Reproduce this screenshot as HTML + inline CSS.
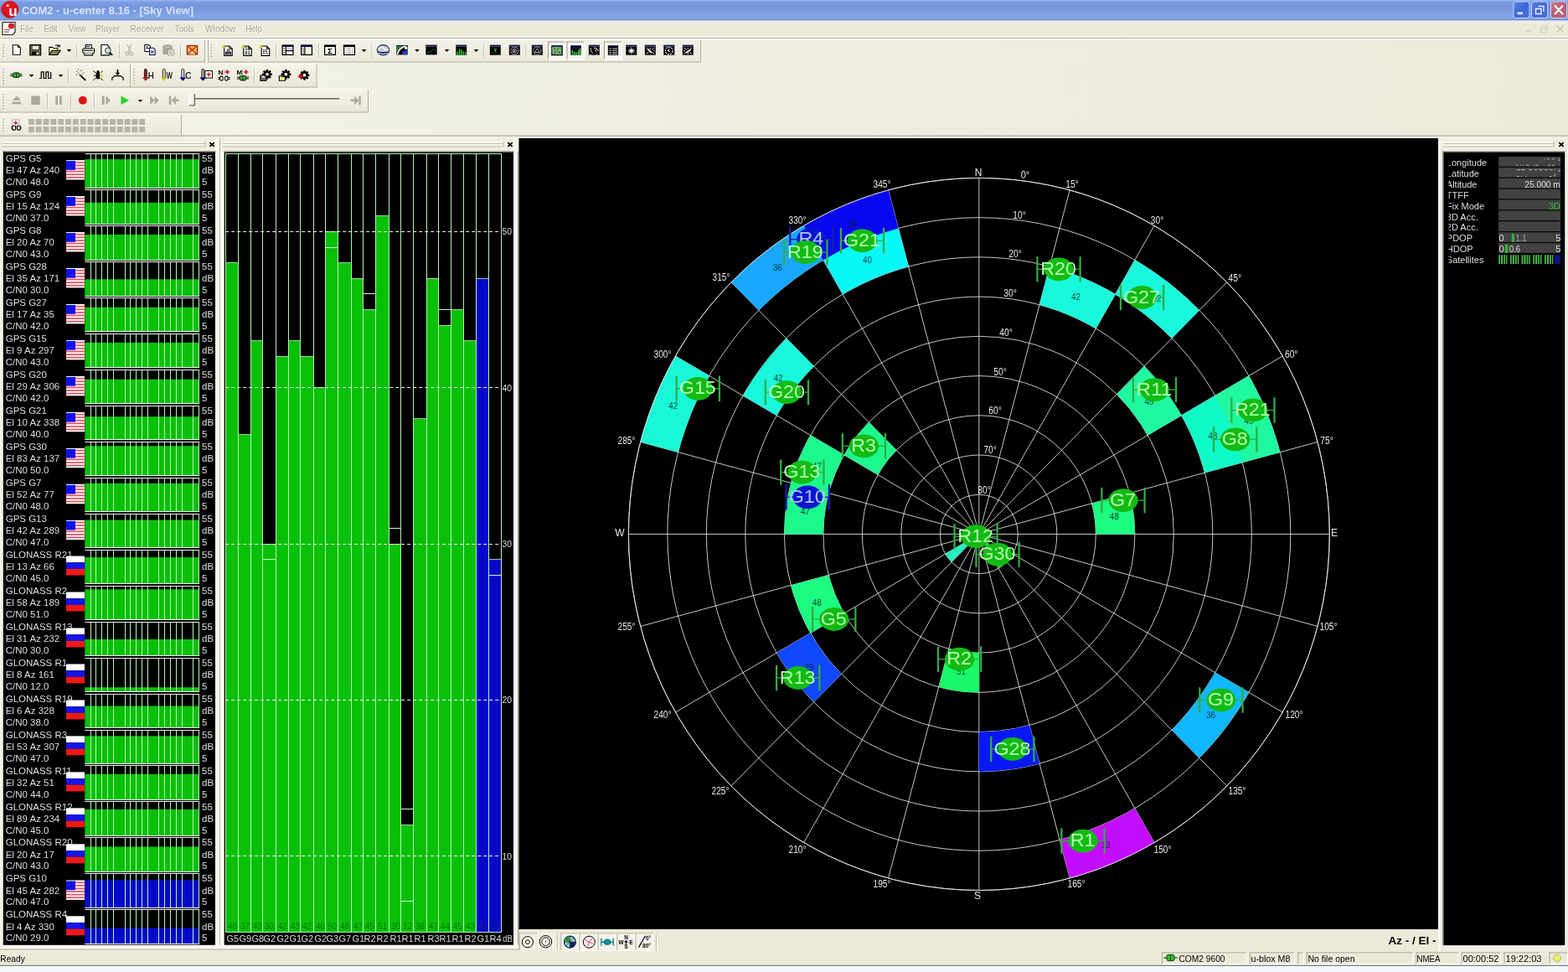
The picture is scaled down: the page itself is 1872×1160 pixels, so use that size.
<!DOCTYPE html>
<html><head><meta charset="utf-8"><title>COM2 - u-center 8.16 - [Sky View]</title>
<style>html,body{margin:0;padding:0;background:#ece9d8;overflow:hidden}svg{display:block;font-family:"Liberation Sans",sans-serif;will-change:transform}</style>
</head><body>
<svg width="1872" height="1160" viewBox="0 0 1872 1160">
<defs>
<linearGradient id="tb" x1="0" y1="0" x2="0" y2="1">
<stop offset="0" stop-color="#9cbcf8"/><stop offset="0.07" stop-color="#80a0e6"/><stop offset="0.3" stop-color="#7594dc"/>
<stop offset="0.55" stop-color="#7a9ae0"/><stop offset="0.8" stop-color="#82a8ea"/><stop offset="0.9" stop-color="#80a4e6"/><stop offset="0.96" stop-color="#7488c4"/><stop offset="1" stop-color="#7488c4"/>
</linearGradient>
<linearGradient id="dock" x1="0" y1="0" x2="1" y2="0">
<stop offset="0" stop-color="#f4f3ec"/><stop offset="0.3" stop-color="#f0efe6"/><stop offset="0.65" stop-color="#eeecdf"/><stop offset="1" stop-color="#ece9d8"/>
</linearGradient>
<linearGradient id="tool" x1="0" y1="0" x2="0" y2="1">
<stop offset="0" stop-color="#f3f2ea"/><stop offset="0.5" stop-color="#efeddf"/><stop offset="1" stop-color="#e9e6d6"/>
</linearGradient>
<linearGradient id="btnb" x1="0" y1="0" x2="1" y2="1">
<stop offset="0" stop-color="#5a80e6"/><stop offset="0.5" stop-color="#3f66d4"/><stop offset="1" stop-color="#4a74dc"/>
</linearGradient>
<linearGradient id="btnr" x1="0" y1="0" x2="1" y2="1">
<stop offset="0" stop-color="#cc7a8c"/><stop offset="0.5" stop-color="#b85a70"/><stop offset="1" stop-color="#c0667a"/>
</linearGradient>
</defs>
<rect x="0.00" y="0.00" width="1872.00" height="1160.00" fill="#ece9d8"/><rect x="0.00" y="46.80" width="1872.00" height="118.00" fill="url(#dock)"/><rect x="0.00" y="0.00" width="1872.00" height="24.70" fill="url(#tb)"/><circle cx="11.8" cy="11.4" r="10.2" fill="#e0141e" stroke="#a01018" stroke-width="0.8" stroke-dasharray="1.2,1"/><circle cx="9.2" cy="6.8" r="1.5" fill="#ffe0e0"/><text x="15.5" y="18.5" font-size="17" fill="#fff" text-anchor="middle" font-weight="bold" font-family='"Liberation Sans", sans-serif'>u</text><text x="26.0" y="17.3" font-size="13.5" fill="#d8e4f8" font-weight="bold" textLength="205" lengthAdjust="spacingAndGlyphs" font-family='"Liberation Sans", sans-serif'>COM2 - u-center 8.16 - [Sky View]</text><rect x="1807" y="2" width="19" height="19.5" rx="3" fill="url(#btnb)" stroke="#c4d4f6" stroke-width="1"/><rect x="1828.6" y="2" width="19" height="19.5" rx="3" fill="url(#btnb)" stroke="#c4d4f6" stroke-width="1"/><rect x="1851.5" y="2" width="19" height="19.5" rx="3" fill="url(#btnr)" stroke="#c4d4f6" stroke-width="1"/><rect x="1811.50" y="14.50" width="6.50" height="2.60" fill="#e8f0ff"/><path d="M1836.5,7.5h6.5v6.5M1833.5,10.5h6.5v6h-6.5z" fill="none" stroke="#e8f0ff" stroke-width="1.4"/><path d="M1856,6.5l10,10.5M1866,6.5l-10,10.5" stroke="#fff" stroke-width="2.2" fill="none"/><rect x="0.00" y="24.70" width="1872.00" height="21.00" fill="#ece9d8"/><rect x="0.00" y="24.70" width="1872.00" height="1.60" fill="#e2eafc"/><rect x="0.00" y="26.30" width="1872.00" height="1.20" fill="#f2f1e8"/><rect x="0.00" y="43.60" width="1872.00" height="1.40" fill="#f8f7ee"/><line x1="0.00" y1="45.50" x2="1872.00" y2="45.50" stroke="#b0ad9c" stroke-width="1"/><line x1="0.00" y1="46.50" x2="1872.00" y2="46.50" stroke="#ffffff" stroke-width="1"/><path d="M3,26.5h15v12l-3,3h-12z" fill="#fff" stroke="#222" stroke-width="1.2"/><circle cx="13.5" cy="31" r="3.6" fill="#d8202c"/><line x1="5.00" y1="35.50" x2="12.00" y2="35.50" stroke="#c04040" stroke-width="1"/><line x1="5.00" y1="38.00" x2="11.00" y2="38.00" stroke="#444" stroke-width="1"/><text x="25.1" y="38.6" font-size="11.5" fill="#ffffff" textLength="15.75" lengthAdjust="spacingAndGlyphs" opacity="0.75" font-family='"Liberation Sans", sans-serif'>File</text><text x="24.2" y="37.8" font-size="11.5" fill="#a8a69c" textLength="15.75" lengthAdjust="spacingAndGlyphs" font-family='"Liberation Sans", sans-serif'>File</text><text x="53.4" y="38.6" font-size="11.5" fill="#ffffff" textLength="16.25" lengthAdjust="spacingAndGlyphs" opacity="0.75" font-family='"Liberation Sans", sans-serif'>Edit</text><text x="52.5" y="37.8" font-size="11.5" fill="#a8a69c" textLength="16.25" lengthAdjust="spacingAndGlyphs" font-family='"Liberation Sans", sans-serif'>Edit</text><text x="82.7" y="38.6" font-size="11.5" fill="#ffffff" textLength="20.75" lengthAdjust="spacingAndGlyphs" opacity="0.75" font-family='"Liberation Sans", sans-serif'>View</text><text x="81.8" y="37.8" font-size="11.5" fill="#a8a69c" textLength="20.75" lengthAdjust="spacingAndGlyphs" font-family='"Liberation Sans", sans-serif'>View</text><text x="115.4" y="38.6" font-size="11.5" fill="#ffffff" textLength="28.75" lengthAdjust="spacingAndGlyphs" opacity="0.75" font-family='"Liberation Sans", sans-serif'>Player</text><text x="114.5" y="37.8" font-size="11.5" fill="#a8a69c" textLength="28.75" lengthAdjust="spacingAndGlyphs" font-family='"Liberation Sans", sans-serif'>Player</text><text x="156.4" y="38.6" font-size="11.5" fill="#ffffff" textLength="40.25" lengthAdjust="spacingAndGlyphs" opacity="0.75" font-family='"Liberation Sans", sans-serif'>Receiver</text><text x="155.5" y="37.8" font-size="11.5" fill="#a8a69c" textLength="40.25" lengthAdjust="spacingAndGlyphs" font-family='"Liberation Sans", sans-serif'>Receiver</text><text x="209.7" y="38.6" font-size="11.5" fill="#ffffff" textLength="23.25" lengthAdjust="spacingAndGlyphs" opacity="0.75" font-family='"Liberation Sans", sans-serif'>Tools</text><text x="208.8" y="37.8" font-size="11.5" fill="#a8a69c" textLength="23.25" lengthAdjust="spacingAndGlyphs" font-family='"Liberation Sans", sans-serif'>Tools</text><text x="245.9" y="38.6" font-size="11.5" fill="#ffffff" textLength="36.25" lengthAdjust="spacingAndGlyphs" opacity="0.75" font-family='"Liberation Sans", sans-serif'>Window</text><text x="245.0" y="37.8" font-size="11.5" fill="#a8a69c" textLength="36.25" lengthAdjust="spacingAndGlyphs" font-family='"Liberation Sans", sans-serif'>Window</text><text x="294.1" y="38.6" font-size="11.5" fill="#ffffff" textLength="19.75" lengthAdjust="spacingAndGlyphs" opacity="0.75" font-family='"Liberation Sans", sans-serif'>Help</text><text x="293.2" y="37.8" font-size="11.5" fill="#a8a69c" textLength="19.75" lengthAdjust="spacingAndGlyphs" font-family='"Liberation Sans", sans-serif'>Help</text><rect x="1821.00" y="36.00" width="7.00" height="1.60" fill="#d0cdbc"/><path d="M1841.5,31h6v6M1839.5,33h6v6h-6z" fill="none" stroke="#d0cdbc" stroke-width="1.2"/><path d="M1859,31l7,7M1866,31l-7,7" stroke="#ccc9b8" stroke-width="1.6" fill="none"/><rect x="0.00" y="47.00" width="245.00" height="27.50" fill="url(#tool)"/><line x1="0.00" y1="74.00" x2="245.00" y2="74.00" stroke="#b4b09c" stroke-width="1"/><line x1="244.50" y1="47.00" x2="244.50" y2="74.50" stroke="#b4b09c" stroke-width="1"/><line x1="0.00" y1="47.50" x2="245.00" y2="47.50" stroke="#fbfaf4" stroke-width="1"/><rect x="3.50" y="53.00" width="1.60" height="1.40" fill="#a09d8c"/><rect x="4.70" y="54.20" width="1.20" height="1.20" fill="#fff"/><rect x="3.50" y="56.45" width="1.60" height="1.40" fill="#a09d8c"/><rect x="4.70" y="57.65" width="1.20" height="1.20" fill="#fff"/><rect x="3.50" y="59.90" width="1.60" height="1.40" fill="#a09d8c"/><rect x="4.70" y="61.10" width="1.20" height="1.20" fill="#fff"/><rect x="3.50" y="63.35" width="1.60" height="1.40" fill="#a09d8c"/><rect x="4.70" y="64.55" width="1.20" height="1.20" fill="#fff"/><rect x="3.50" y="66.80" width="1.60" height="1.40" fill="#a09d8c"/><rect x="4.70" y="68.00" width="1.20" height="1.20" fill="#fff"/><rect x="248.00" y="47.00" width="589.00" height="27.50" fill="url(#tool)"/><line x1="248.00" y1="74.00" x2="837.00" y2="74.00" stroke="#b4b09c" stroke-width="1"/><line x1="836.50" y1="47.00" x2="836.50" y2="74.50" stroke="#b4b09c" stroke-width="1"/><line x1="248.00" y1="47.50" x2="837.00" y2="47.50" stroke="#fbfaf4" stroke-width="1"/><rect x="251.50" y="53.00" width="1.60" height="1.40" fill="#a09d8c"/><rect x="252.70" y="54.20" width="1.20" height="1.20" fill="#fff"/><rect x="251.50" y="56.45" width="1.60" height="1.40" fill="#a09d8c"/><rect x="252.70" y="57.65" width="1.20" height="1.20" fill="#fff"/><rect x="251.50" y="59.90" width="1.60" height="1.40" fill="#a09d8c"/><rect x="252.70" y="61.10" width="1.20" height="1.20" fill="#fff"/><rect x="251.50" y="63.35" width="1.60" height="1.40" fill="#a09d8c"/><rect x="252.70" y="64.55" width="1.20" height="1.20" fill="#fff"/><rect x="251.50" y="66.80" width="1.60" height="1.40" fill="#a09d8c"/><rect x="252.70" y="68.00" width="1.20" height="1.20" fill="#fff"/><line x1="248.50" y1="47.00" x2="248.50" y2="74.50" stroke="#b4b09c" stroke-width="1"/><rect x="0.00" y="76.00" width="156.00" height="28.50" fill="url(#tool)"/><line x1="0.00" y1="104.00" x2="156.00" y2="104.00" stroke="#b4b09c" stroke-width="1"/><line x1="155.50" y1="76.00" x2="155.50" y2="104.50" stroke="#b4b09c" stroke-width="1"/><line x1="0.00" y1="76.50" x2="156.00" y2="76.50" stroke="#fbfaf4" stroke-width="1"/><rect x="3.50" y="82.00" width="1.60" height="1.40" fill="#a09d8c"/><rect x="4.70" y="83.20" width="1.20" height="1.20" fill="#fff"/><rect x="3.50" y="85.45" width="1.60" height="1.40" fill="#a09d8c"/><rect x="4.70" y="86.65" width="1.20" height="1.20" fill="#fff"/><rect x="3.50" y="88.90" width="1.60" height="1.40" fill="#a09d8c"/><rect x="4.70" y="90.10" width="1.20" height="1.20" fill="#fff"/><rect x="3.50" y="92.35" width="1.60" height="1.40" fill="#a09d8c"/><rect x="4.70" y="93.55" width="1.20" height="1.20" fill="#fff"/><rect x="3.50" y="95.80" width="1.60" height="1.40" fill="#a09d8c"/><rect x="4.70" y="97.00" width="1.20" height="1.20" fill="#fff"/><rect x="3.50" y="99.25" width="1.60" height="1.40" fill="#a09d8c"/><rect x="4.70" y="100.45" width="1.20" height="1.20" fill="#fff"/><rect x="156.00" y="76.00" width="222.50" height="28.50" fill="url(#tool)"/><line x1="156.00" y1="104.00" x2="378.50" y2="104.00" stroke="#b4b09c" stroke-width="1"/><line x1="378.00" y1="76.00" x2="378.00" y2="104.50" stroke="#b4b09c" stroke-width="1"/><line x1="156.00" y1="76.50" x2="378.50" y2="76.50" stroke="#fbfaf4" stroke-width="1"/><rect x="159.50" y="82.00" width="1.60" height="1.40" fill="#a09d8c"/><rect x="160.70" y="83.20" width="1.20" height="1.20" fill="#fff"/><rect x="159.50" y="85.45" width="1.60" height="1.40" fill="#a09d8c"/><rect x="160.70" y="86.65" width="1.20" height="1.20" fill="#fff"/><rect x="159.50" y="88.90" width="1.60" height="1.40" fill="#a09d8c"/><rect x="160.70" y="90.10" width="1.20" height="1.20" fill="#fff"/><rect x="159.50" y="92.35" width="1.60" height="1.40" fill="#a09d8c"/><rect x="160.70" y="93.55" width="1.20" height="1.20" fill="#fff"/><rect x="159.50" y="95.80" width="1.60" height="1.40" fill="#a09d8c"/><rect x="160.70" y="97.00" width="1.20" height="1.20" fill="#fff"/><rect x="159.50" y="99.25" width="1.60" height="1.40" fill="#a09d8c"/><rect x="160.70" y="100.45" width="1.20" height="1.20" fill="#fff"/><line x1="155.50" y1="76.00" x2="155.50" y2="104.50" stroke="#b4b09c" stroke-width="1"/><rect x="0.00" y="106.00" width="440.00" height="28.50" fill="url(#tool)"/><line x1="0.00" y1="134.00" x2="440.00" y2="134.00" stroke="#b4b09c" stroke-width="1"/><line x1="439.50" y1="106.00" x2="439.50" y2="134.50" stroke="#b4b09c" stroke-width="1"/><line x1="0.00" y1="106.50" x2="440.00" y2="106.50" stroke="#fbfaf4" stroke-width="1"/><rect x="3.50" y="112.00" width="1.60" height="1.40" fill="#a09d8c"/><rect x="4.70" y="113.20" width="1.20" height="1.20" fill="#fff"/><rect x="3.50" y="115.45" width="1.60" height="1.40" fill="#a09d8c"/><rect x="4.70" y="116.65" width="1.20" height="1.20" fill="#fff"/><rect x="3.50" y="118.90" width="1.60" height="1.40" fill="#a09d8c"/><rect x="4.70" y="120.10" width="1.20" height="1.20" fill="#fff"/><rect x="3.50" y="122.35" width="1.60" height="1.40" fill="#a09d8c"/><rect x="4.70" y="123.55" width="1.20" height="1.20" fill="#fff"/><rect x="3.50" y="125.80" width="1.60" height="1.40" fill="#a09d8c"/><rect x="4.70" y="127.00" width="1.20" height="1.20" fill="#fff"/><rect x="3.50" y="129.25" width="1.60" height="1.40" fill="#a09d8c"/><rect x="4.70" y="130.45" width="1.20" height="1.20" fill="#fff"/><rect x="0.00" y="136.00" width="217.00" height="27.50" fill="url(#tool)"/><line x1="0.00" y1="163.00" x2="217.00" y2="163.00" stroke="#b4b09c" stroke-width="1"/><line x1="216.50" y1="136.00" x2="216.50" y2="163.50" stroke="#b4b09c" stroke-width="1"/><line x1="0.00" y1="136.50" x2="217.00" y2="136.50" stroke="#fbfaf4" stroke-width="1"/><rect x="3.50" y="142.00" width="1.60" height="1.40" fill="#a09d8c"/><rect x="4.70" y="143.20" width="1.20" height="1.20" fill="#fff"/><rect x="3.50" y="145.45" width="1.60" height="1.40" fill="#a09d8c"/><rect x="4.70" y="146.65" width="1.20" height="1.20" fill="#fff"/><rect x="3.50" y="148.90" width="1.60" height="1.40" fill="#a09d8c"/><rect x="4.70" y="150.10" width="1.20" height="1.20" fill="#fff"/><rect x="3.50" y="152.35" width="1.60" height="1.40" fill="#a09d8c"/><rect x="4.70" y="153.55" width="1.20" height="1.20" fill="#fff"/><rect x="3.50" y="155.80" width="1.60" height="1.40" fill="#a09d8c"/><rect x="4.70" y="157.00" width="1.20" height="1.20" fill="#fff"/><rect x="0.00" y="161.00" width="1872.00" height="2.40" fill="#c9c6ba"/><rect x="0.00" y="163.40" width="1872.00" height="1.60" fill="#f6f5ee"/><rect x="0.00" y="165.00" width="619.50" height="972.00" fill="#efede1"/><rect x="1717.00" y="165.00" width="155.00" height="972.00" fill="#efede1"/><rect x="619.50" y="1109.00" width="1097.50" height="28.00" fill="#ece9d8"/><rect x="0.00" y="1132.50" width="619.50" height="4.50" fill="#ece9d8"/><rect x="257.00" y="165.00" width="4.80" height="967.50" fill="#f8f7f1"/><line x1="262.30" y1="165.00" x2="262.30" y2="1133.00" stroke="#aeab9a" stroke-width="1"/><rect x="262.80" y="165.00" width="5.00" height="967.50" fill="#f8f7f1"/><rect x="613.00" y="165.00" width="5.00" height="967.50" fill="#f6f5ee"/><line x1="618.70" y1="165.00" x2="618.70" y2="1133.00" stroke="#a8a596" stroke-width="1.5"/><rect x="1717.00" y="165.00" width="2.50" height="972.00" fill="#fbfaf5"/><rect x="0.00" y="165.00" width="3.80" height="967.50" fill="#f4f3ea"/><rect x="0.00" y="1127.80" width="619.00" height="4.70" fill="#faf9f4"/><line x1="0.00" y1="1133.00" x2="619.50" y2="1133.00" stroke="#b0ad9c" stroke-width="1"/><rect x="0.00" y="165.00" width="619.50" height="15.40" fill="#efede1"/><rect x="257.00" y="165.00" width="5.00" height="15.40" fill="#f8f7f1"/><rect x="613.00" y="165.00" width="5.00" height="15.40" fill="#f6f5ee"/><line x1="262.30" y1="165.00" x2="262.30" y2="181.00" stroke="#aeab9a" stroke-width="1"/><rect x="2.50" y="168.90" width="242.00" height="2.30" fill="#fcfbf3"/><line x1="2.50" y1="171.60" x2="244.50" y2="171.60" stroke="#b4b19e" stroke-width="0.9"/><line x1="244.50" y1="168.90" x2="244.50" y2="171.90" stroke="#b4b19e" stroke-width="0.9"/><rect x="2.50" y="172.10" width="242.00" height="2.30" fill="#fcfbf3"/><line x1="2.50" y1="174.80" x2="244.50" y2="174.80" stroke="#b4b19e" stroke-width="0.9"/><line x1="244.50" y1="172.10" x2="244.50" y2="175.10" stroke="#b4b19e" stroke-width="0.9"/><path d="M250.3,170.1l5.4,4.8M255.7,170.1l-5.4,4.8" stroke="#000" stroke-width="1.8" fill="none"/><rect x="266.00" y="168.90" width="335.00" height="2.30" fill="#fcfbf3"/><line x1="266.00" y1="171.60" x2="601.00" y2="171.60" stroke="#b4b19e" stroke-width="0.9"/><line x1="601.00" y1="168.90" x2="601.00" y2="171.90" stroke="#b4b19e" stroke-width="0.9"/><rect x="266.00" y="172.10" width="335.00" height="2.30" fill="#fcfbf3"/><line x1="266.00" y1="174.80" x2="601.00" y2="174.80" stroke="#b4b19e" stroke-width="0.9"/><line x1="601.00" y1="172.10" x2="601.00" y2="175.10" stroke="#b4b19e" stroke-width="0.9"/><path d="M606.3,170.1l5.4,4.8M611.7,170.1l-5.4,4.8" stroke="#000" stroke-width="1.8" fill="none"/><rect x="1722.50" y="168.90" width="132.50" height="2.30" fill="#fcfbf3"/><line x1="1722.50" y1="171.60" x2="1855.00" y2="171.60" stroke="#b4b19e" stroke-width="0.9"/><line x1="1855.00" y1="168.90" x2="1855.00" y2="171.90" stroke="#b4b19e" stroke-width="0.9"/><rect x="1722.50" y="172.10" width="132.50" height="2.30" fill="#fcfbf3"/><line x1="1722.50" y1="174.80" x2="1855.00" y2="174.80" stroke="#b4b19e" stroke-width="0.9"/><line x1="1855.00" y1="172.10" x2="1855.00" y2="175.10" stroke="#b4b19e" stroke-width="0.9"/><path d="M1861.3,170.1l5.4,4.8M1866.7,170.1l-5.4,4.8" stroke="#000" stroke-width="1.8" fill="none"/><rect x="3.00" y="180.30" width="254.50" height="1.40" fill="#7c796a"/><rect x="267.00" y="180.50" width="346.50" height="1.40" fill="#7c796a"/><rect x="1722.00" y="180.50" width="147.50" height="1.30" fill="#7c796a"/><rect x="1722.00" y="180.50" width="1.40" height="949.00" fill="#8a8778"/><rect x="1722.00" y="1128.30" width="147.50" height="1.20" fill="#fff"/><rect x="1868.40" y="180.50" width="1.20" height="949.00" fill="#fff"/>
<g font-family='"Liberation Sans", sans-serif'>
<rect x="3.80" y="181.50" width="253.20" height="946.30" fill="#000"/>
<rect x="101.30" y="190.07" width="136.30" height="34.03" fill="#08c008"/>
<path d="M108.50,183.50V224.10M114.50,183.50V224.10M121.50,183.50V224.10M128.50,183.50V224.10M135.50,183.50V224.10M149.50,183.50V224.10M155.50,183.50V224.10M162.50,183.50V224.10M169.50,183.50V224.10M176.50,183.50V224.10M189.50,183.50V224.10M196.50,183.50V224.10M203.50,183.50V224.10M210.50,183.50V224.10M217.50,183.50V224.10M230.50,183.50V224.10M237.50,183.50V224.10" stroke="#b8f4b8" stroke-width="1" fill="none"/>
<path d="M101.30,183.50H238.10M101.30,224.50H238.10" stroke="#f4f4f4" stroke-width="1" fill="none"/>
<text x="6.7" y="193.0" font-size="11.5" fill="#dedede">GPS G5</text>
<text x="6.7" y="207.1" font-size="11.5" fill="#dedede">El 47 Az 240</text>
<text x="6.7" y="221.0" font-size="11.5" fill="#dedede">C/N0 48.0</text>
<text x="241.0" y="193.0" font-size="11.5" fill="#dedede">55</text>
<text x="241.0" y="207.1" font-size="11.5" fill="#dedede">dB</text>
<text x="241.0" y="221.0" font-size="11.5" fill="#dedede">5</text>
<rect x="79.00" y="191.10" width="22.00" height="23.40" fill="#fff"/><rect x="79.00" y="192.90" width="22.00" height="1.80" fill="#e85864"/><rect x="79.00" y="196.50" width="22.00" height="1.80" fill="#e85864"/><rect x="79.00" y="200.10" width="22.00" height="1.80" fill="#e85864"/><rect x="79.00" y="203.70" width="22.00" height="1.80" fill="#e85864"/><rect x="79.00" y="207.30" width="22.00" height="1.80" fill="#e85864"/><rect x="79.00" y="210.90" width="22.00" height="1.80" fill="#e85864"/><rect x="79.00" y="192.10" width="11.00" height="10.76" fill="#1010ee"/>
<rect x="101.30" y="241.80" width="136.30" height="25.27" fill="#08c008"/>
<path d="M108.50,226.47V267.07M114.50,226.47V267.07M121.50,226.47V267.07M128.50,226.47V267.07M135.50,226.47V267.07M149.50,226.47V267.07M155.50,226.47V267.07M162.50,226.47V267.07M169.50,226.47V267.07M176.50,226.47V267.07M189.50,226.47V267.07M196.50,226.47V267.07M203.50,226.47V267.07M210.50,226.47V267.07M217.50,226.47V267.07M230.50,226.47V267.07M237.50,226.47V267.07" stroke="#b8f4b8" stroke-width="1" fill="none"/>
<path d="M101.30,226.50H238.10M101.30,267.50H238.10" stroke="#f4f4f4" stroke-width="1" fill="none"/>
<text x="6.7" y="236.0" font-size="11.5" fill="#dedede">GPS G9</text>
<text x="6.7" y="250.1" font-size="11.5" fill="#dedede">El 15 Az 124</text>
<text x="6.7" y="264.0" font-size="11.5" fill="#dedede">C/N0 37.0</text>
<text x="241.0" y="236.0" font-size="11.5" fill="#dedede">55</text>
<text x="241.0" y="250.1" font-size="11.5" fill="#dedede">dB</text>
<text x="241.0" y="264.0" font-size="11.5" fill="#dedede">5</text>
<rect x="79.00" y="234.07" width="22.00" height="23.40" fill="#fff"/><rect x="79.00" y="235.87" width="22.00" height="1.80" fill="#e85864"/><rect x="79.00" y="239.47" width="22.00" height="1.80" fill="#e85864"/><rect x="79.00" y="243.07" width="22.00" height="1.80" fill="#e85864"/><rect x="79.00" y="246.67" width="22.00" height="1.80" fill="#e85864"/><rect x="79.00" y="250.27" width="22.00" height="1.80" fill="#e85864"/><rect x="79.00" y="253.87" width="22.00" height="1.80" fill="#e85864"/><rect x="79.00" y="235.07" width="11.00" height="10.76" fill="#1010ee"/>
<rect x="101.30" y="279.99" width="136.30" height="30.05" fill="#08c008"/>
<path d="M108.50,269.44V310.04M114.50,269.44V310.04M121.50,269.44V310.04M128.50,269.44V310.04M135.50,269.44V310.04M149.50,269.44V310.04M155.50,269.44V310.04M162.50,269.44V310.04M169.50,269.44V310.04M176.50,269.44V310.04M189.50,269.44V310.04M196.50,269.44V310.04M203.50,269.44V310.04M210.50,269.44V310.04M217.50,269.44V310.04M230.50,269.44V310.04M237.50,269.44V310.04" stroke="#b8f4b8" stroke-width="1" fill="none"/>
<path d="M101.30,269.50H238.10M101.30,310.50H238.10" stroke="#f4f4f4" stroke-width="1" fill="none"/>
<text x="6.7" y="278.9" font-size="11.5" fill="#dedede">GPS G8</text>
<text x="6.7" y="293.0" font-size="11.5" fill="#dedede">El 20 Az 70</text>
<text x="6.7" y="306.9" font-size="11.5" fill="#dedede">C/N0 43.0</text>
<text x="241.0" y="278.9" font-size="11.5" fill="#dedede">55</text>
<text x="241.0" y="293.0" font-size="11.5" fill="#dedede">dB</text>
<text x="241.0" y="306.9" font-size="11.5" fill="#dedede">5</text>
<rect x="79.00" y="277.04" width="22.00" height="23.40" fill="#fff"/><rect x="79.00" y="278.84" width="22.00" height="1.80" fill="#e85864"/><rect x="79.00" y="282.44" width="22.00" height="1.80" fill="#e85864"/><rect x="79.00" y="286.04" width="22.00" height="1.80" fill="#e85864"/><rect x="79.00" y="289.64" width="22.00" height="1.80" fill="#e85864"/><rect x="79.00" y="293.24" width="22.00" height="1.80" fill="#e85864"/><rect x="79.00" y="296.84" width="22.00" height="1.80" fill="#e85864"/><rect x="79.00" y="278.04" width="11.00" height="10.76" fill="#1010ee"/>
<rect x="101.30" y="333.31" width="136.30" height="19.70" fill="#08c008"/>
<path d="M108.50,312.41V353.01M114.50,312.41V353.01M121.50,312.41V353.01M128.50,312.41V353.01M135.50,312.41V353.01M149.50,312.41V353.01M155.50,312.41V353.01M162.50,312.41V353.01M169.50,312.41V353.01M176.50,312.41V353.01M189.50,312.41V353.01M196.50,312.41V353.01M203.50,312.41V353.01M210.50,312.41V353.01M217.50,312.41V353.01M230.50,312.41V353.01M237.50,312.41V353.01" stroke="#b8f4b8" stroke-width="1" fill="none"/>
<path d="M101.30,312.50H238.10M101.30,353.50H238.10" stroke="#f4f4f4" stroke-width="1" fill="none"/>
<text x="6.7" y="321.9" font-size="11.5" fill="#dedede">GPS G28</text>
<text x="6.7" y="336.0" font-size="11.5" fill="#dedede">El 35 Az 171</text>
<text x="6.7" y="349.9" font-size="11.5" fill="#dedede">C/N0 30.0</text>
<text x="241.0" y="321.9" font-size="11.5" fill="#dedede">55</text>
<text x="241.0" y="336.0" font-size="11.5" fill="#dedede">dB</text>
<text x="241.0" y="349.9" font-size="11.5" fill="#dedede">5</text>
<rect x="79.00" y="320.01" width="22.00" height="23.40" fill="#fff"/><rect x="79.00" y="321.81" width="22.00" height="1.80" fill="#e85864"/><rect x="79.00" y="325.41" width="22.00" height="1.80" fill="#e85864"/><rect x="79.00" y="329.01" width="22.00" height="1.80" fill="#e85864"/><rect x="79.00" y="332.61" width="22.00" height="1.80" fill="#e85864"/><rect x="79.00" y="336.21" width="22.00" height="1.80" fill="#e85864"/><rect x="79.00" y="339.81" width="22.00" height="1.80" fill="#e85864"/><rect x="79.00" y="321.01" width="11.00" height="10.76" fill="#1010ee"/>
<rect x="101.30" y="366.73" width="136.30" height="29.25" fill="#08c008"/>
<path d="M108.50,355.38V395.98M114.50,355.38V395.98M121.50,355.38V395.98M128.50,355.38V395.98M135.50,355.38V395.98M149.50,355.38V395.98M155.50,355.38V395.98M162.50,355.38V395.98M169.50,355.38V395.98M176.50,355.38V395.98M189.50,355.38V395.98M196.50,355.38V395.98M203.50,355.38V395.98M210.50,355.38V395.98M217.50,355.38V395.98M230.50,355.38V395.98M237.50,355.38V395.98" stroke="#b8f4b8" stroke-width="1" fill="none"/>
<path d="M101.30,355.50H238.10M101.30,395.50H238.10" stroke="#f4f4f4" stroke-width="1" fill="none"/>
<text x="6.7" y="364.9" font-size="11.5" fill="#dedede">GPS G27</text>
<text x="6.7" y="379.0" font-size="11.5" fill="#dedede">El 17 Az 35</text>
<text x="6.7" y="392.9" font-size="11.5" fill="#dedede">C/N0 42.0</text>
<text x="241.0" y="364.9" font-size="11.5" fill="#dedede">55</text>
<text x="241.0" y="379.0" font-size="11.5" fill="#dedede">dB</text>
<text x="241.0" y="392.9" font-size="11.5" fill="#dedede">5</text>
<rect x="79.00" y="362.98" width="22.00" height="23.40" fill="#fff"/><rect x="79.00" y="364.78" width="22.00" height="1.80" fill="#e85864"/><rect x="79.00" y="368.38" width="22.00" height="1.80" fill="#e85864"/><rect x="79.00" y="371.98" width="22.00" height="1.80" fill="#e85864"/><rect x="79.00" y="375.58" width="22.00" height="1.80" fill="#e85864"/><rect x="79.00" y="379.18" width="22.00" height="1.80" fill="#e85864"/><rect x="79.00" y="382.78" width="22.00" height="1.80" fill="#e85864"/><rect x="79.00" y="363.98" width="11.00" height="10.76" fill="#1010ee"/>
<rect x="101.30" y="408.90" width="136.30" height="30.05" fill="#08c008"/>
<path d="M108.50,398.35V438.95M114.50,398.35V438.95M121.50,398.35V438.95M128.50,398.35V438.95M135.50,398.35V438.95M149.50,398.35V438.95M155.50,398.35V438.95M162.50,398.35V438.95M169.50,398.35V438.95M176.50,398.35V438.95M189.50,398.35V438.95M196.50,398.35V438.95M203.50,398.35V438.95M210.50,398.35V438.95M217.50,398.35V438.95M230.50,398.35V438.95M237.50,398.35V438.95" stroke="#b8f4b8" stroke-width="1" fill="none"/>
<path d="M101.30,398.50H238.10M101.30,438.50H238.10" stroke="#f4f4f4" stroke-width="1" fill="none"/>
<text x="6.7" y="407.9" font-size="11.5" fill="#dedede">GPS G15</text>
<text x="6.7" y="422.0" font-size="11.5" fill="#dedede">El 9 Az 297</text>
<text x="6.7" y="435.9" font-size="11.5" fill="#dedede">C/N0 43.0</text>
<text x="241.0" y="407.9" font-size="11.5" fill="#dedede">55</text>
<text x="241.0" y="422.0" font-size="11.5" fill="#dedede">dB</text>
<text x="241.0" y="435.9" font-size="11.5" fill="#dedede">5</text>
<rect x="79.00" y="405.95" width="22.00" height="23.40" fill="#fff"/><rect x="79.00" y="407.75" width="22.00" height="1.80" fill="#e85864"/><rect x="79.00" y="411.35" width="22.00" height="1.80" fill="#e85864"/><rect x="79.00" y="414.95" width="22.00" height="1.80" fill="#e85864"/><rect x="79.00" y="418.55" width="22.00" height="1.80" fill="#e85864"/><rect x="79.00" y="422.15" width="22.00" height="1.80" fill="#e85864"/><rect x="79.00" y="425.75" width="22.00" height="1.80" fill="#e85864"/><rect x="79.00" y="406.95" width="11.00" height="10.76" fill="#1010ee"/>
<rect x="101.30" y="452.67" width="136.30" height="29.25" fill="#08c008"/>
<path d="M108.50,441.32V481.92M114.50,441.32V481.92M121.50,441.32V481.92M128.50,441.32V481.92M135.50,441.32V481.92M149.50,441.32V481.92M155.50,441.32V481.92M162.50,441.32V481.92M169.50,441.32V481.92M176.50,441.32V481.92M189.50,441.32V481.92M196.50,441.32V481.92M203.50,441.32V481.92M210.50,441.32V481.92M217.50,441.32V481.92M230.50,441.32V481.92M237.50,441.32V481.92" stroke="#b8f4b8" stroke-width="1" fill="none"/>
<path d="M101.30,441.50H238.10M101.30,481.50H238.10" stroke="#f4f4f4" stroke-width="1" fill="none"/>
<text x="6.7" y="450.8" font-size="11.5" fill="#dedede">GPS G20</text>
<text x="6.7" y="464.9" font-size="11.5" fill="#dedede">El 29 Az 306</text>
<text x="6.7" y="478.8" font-size="11.5" fill="#dedede">C/N0 42.0</text>
<text x="241.0" y="450.8" font-size="11.5" fill="#dedede">55</text>
<text x="241.0" y="464.9" font-size="11.5" fill="#dedede">dB</text>
<text x="241.0" y="478.8" font-size="11.5" fill="#dedede">5</text>
<rect x="79.00" y="448.92" width="22.00" height="23.40" fill="#fff"/><rect x="79.00" y="450.72" width="22.00" height="1.80" fill="#e85864"/><rect x="79.00" y="454.32" width="22.00" height="1.80" fill="#e85864"/><rect x="79.00" y="457.92" width="22.00" height="1.80" fill="#e85864"/><rect x="79.00" y="461.52" width="22.00" height="1.80" fill="#e85864"/><rect x="79.00" y="465.12" width="22.00" height="1.80" fill="#e85864"/><rect x="79.00" y="468.72" width="22.00" height="1.80" fill="#e85864"/><rect x="79.00" y="449.92" width="11.00" height="10.76" fill="#1010ee"/>
<rect x="101.30" y="497.23" width="136.30" height="27.66" fill="#08c008"/>
<path d="M108.50,484.29V524.89M114.50,484.29V524.89M121.50,484.29V524.89M128.50,484.29V524.89M135.50,484.29V524.89M149.50,484.29V524.89M155.50,484.29V524.89M162.50,484.29V524.89M169.50,484.29V524.89M176.50,484.29V524.89M189.50,484.29V524.89M196.50,484.29V524.89M203.50,484.29V524.89M210.50,484.29V524.89M217.50,484.29V524.89M230.50,484.29V524.89M237.50,484.29V524.89" stroke="#b8f4b8" stroke-width="1" fill="none"/>
<path d="M101.30,484.50H238.10M101.30,524.50H238.10" stroke="#f4f4f4" stroke-width="1" fill="none"/>
<text x="6.7" y="493.8" font-size="11.5" fill="#dedede">GPS G21</text>
<text x="6.7" y="507.9" font-size="11.5" fill="#dedede">El 10 Az 338</text>
<text x="6.7" y="521.8" font-size="11.5" fill="#dedede">C/N0 40.0</text>
<text x="241.0" y="493.8" font-size="11.5" fill="#dedede">55</text>
<text x="241.0" y="507.9" font-size="11.5" fill="#dedede">dB</text>
<text x="241.0" y="521.8" font-size="11.5" fill="#dedede">5</text>
<rect x="79.00" y="491.89" width="22.00" height="23.40" fill="#fff"/><rect x="79.00" y="493.69" width="22.00" height="1.80" fill="#e85864"/><rect x="79.00" y="497.29" width="22.00" height="1.80" fill="#e85864"/><rect x="79.00" y="500.89" width="22.00" height="1.80" fill="#e85864"/><rect x="79.00" y="504.49" width="22.00" height="1.80" fill="#e85864"/><rect x="79.00" y="508.09" width="22.00" height="1.80" fill="#e85864"/><rect x="79.00" y="511.69" width="22.00" height="1.80" fill="#e85864"/><rect x="79.00" y="492.89" width="11.00" height="10.76" fill="#1010ee"/>
<rect x="101.30" y="532.24" width="136.30" height="35.62" fill="#08c008"/>
<path d="M108.50,527.26V567.86M114.50,527.26V567.86M121.50,527.26V567.86M128.50,527.26V567.86M135.50,527.26V567.86M149.50,527.26V567.86M155.50,527.26V567.86M162.50,527.26V567.86M169.50,527.26V567.86M176.50,527.26V567.86M189.50,527.26V567.86M196.50,527.26V567.86M203.50,527.26V567.86M210.50,527.26V567.86M217.50,527.26V567.86M230.50,527.26V567.86M237.50,527.26V567.86" stroke="#b8f4b8" stroke-width="1" fill="none"/>
<path d="M101.30,527.50H238.10M101.30,567.50H238.10" stroke="#f4f4f4" stroke-width="1" fill="none"/>
<text x="6.7" y="536.8" font-size="11.5" fill="#dedede">GPS G30</text>
<text x="6.7" y="550.9" font-size="11.5" fill="#dedede">El 83 Az 137</text>
<text x="6.7" y="564.8" font-size="11.5" fill="#dedede">C/N0 50.0</text>
<text x="241.0" y="536.8" font-size="11.5" fill="#dedede">55</text>
<text x="241.0" y="550.9" font-size="11.5" fill="#dedede">dB</text>
<text x="241.0" y="564.8" font-size="11.5" fill="#dedede">5</text>
<rect x="79.00" y="534.86" width="22.00" height="23.40" fill="#fff"/><rect x="79.00" y="536.66" width="22.00" height="1.80" fill="#e85864"/><rect x="79.00" y="540.26" width="22.00" height="1.80" fill="#e85864"/><rect x="79.00" y="543.86" width="22.00" height="1.80" fill="#e85864"/><rect x="79.00" y="547.46" width="22.00" height="1.80" fill="#e85864"/><rect x="79.00" y="551.06" width="22.00" height="1.80" fill="#e85864"/><rect x="79.00" y="554.66" width="22.00" height="1.80" fill="#e85864"/><rect x="79.00" y="535.86" width="11.00" height="10.76" fill="#1010ee"/>
<rect x="101.30" y="576.80" width="136.30" height="34.03" fill="#08c008"/>
<path d="M108.50,570.23V610.83M114.50,570.23V610.83M121.50,570.23V610.83M128.50,570.23V610.83M135.50,570.23V610.83M149.50,570.23V610.83M155.50,570.23V610.83M162.50,570.23V610.83M169.50,570.23V610.83M176.50,570.23V610.83M189.50,570.23V610.83M196.50,570.23V610.83M203.50,570.23V610.83M210.50,570.23V610.83M217.50,570.23V610.83M230.50,570.23V610.83M237.50,570.23V610.83" stroke="#b8f4b8" stroke-width="1" fill="none"/>
<path d="M101.30,570.50H238.10M101.30,610.50H238.10" stroke="#f4f4f4" stroke-width="1" fill="none"/>
<text x="6.7" y="579.7" font-size="11.5" fill="#dedede">GPS G7</text>
<text x="6.7" y="593.8" font-size="11.5" fill="#dedede">El 52 Az 77</text>
<text x="6.7" y="607.7" font-size="11.5" fill="#dedede">C/N0 48.0</text>
<text x="241.0" y="579.7" font-size="11.5" fill="#dedede">55</text>
<text x="241.0" y="593.8" font-size="11.5" fill="#dedede">dB</text>
<text x="241.0" y="607.7" font-size="11.5" fill="#dedede">5</text>
<rect x="79.00" y="577.83" width="22.00" height="23.40" fill="#fff"/><rect x="79.00" y="579.63" width="22.00" height="1.80" fill="#e85864"/><rect x="79.00" y="583.23" width="22.00" height="1.80" fill="#e85864"/><rect x="79.00" y="586.83" width="22.00" height="1.80" fill="#e85864"/><rect x="79.00" y="590.43" width="22.00" height="1.80" fill="#e85864"/><rect x="79.00" y="594.03" width="22.00" height="1.80" fill="#e85864"/><rect x="79.00" y="597.63" width="22.00" height="1.80" fill="#e85864"/><rect x="79.00" y="578.83" width="11.00" height="10.76" fill="#1010ee"/>
<rect x="101.30" y="620.57" width="136.30" height="33.23" fill="#08c008"/>
<path d="M108.50,613.20V653.80M114.50,613.20V653.80M121.50,613.20V653.80M128.50,613.20V653.80M135.50,613.20V653.80M149.50,613.20V653.80M155.50,613.20V653.80M162.50,613.20V653.80M169.50,613.20V653.80M176.50,613.20V653.80M189.50,613.20V653.80M196.50,613.20V653.80M203.50,613.20V653.80M210.50,613.20V653.80M217.50,613.20V653.80M230.50,613.20V653.80M237.50,613.20V653.80" stroke="#b8f4b8" stroke-width="1" fill="none"/>
<path d="M101.30,613.50H238.10M101.30,653.50H238.10" stroke="#f4f4f4" stroke-width="1" fill="none"/>
<text x="6.7" y="622.7" font-size="11.5" fill="#dedede">GPS G13</text>
<text x="6.7" y="636.8" font-size="11.5" fill="#dedede">El 42 Az 289</text>
<text x="6.7" y="650.7" font-size="11.5" fill="#dedede">C/N0 47.0</text>
<text x="241.0" y="622.7" font-size="11.5" fill="#dedede">55</text>
<text x="241.0" y="636.8" font-size="11.5" fill="#dedede">dB</text>
<text x="241.0" y="650.7" font-size="11.5" fill="#dedede">5</text>
<rect x="79.00" y="620.80" width="22.00" height="23.40" fill="#fff"/><rect x="79.00" y="622.60" width="22.00" height="1.80" fill="#e85864"/><rect x="79.00" y="626.20" width="22.00" height="1.80" fill="#e85864"/><rect x="79.00" y="629.80" width="22.00" height="1.80" fill="#e85864"/><rect x="79.00" y="633.40" width="22.00" height="1.80" fill="#e85864"/><rect x="79.00" y="637.00" width="22.00" height="1.80" fill="#e85864"/><rect x="79.00" y="640.60" width="22.00" height="1.80" fill="#e85864"/><rect x="79.00" y="621.80" width="11.00" height="10.76" fill="#1010ee"/>
<rect x="101.30" y="665.13" width="136.30" height="31.64" fill="#08c008"/>
<path d="M108.50,656.17V696.77M114.50,656.17V696.77M121.50,656.17V696.77M128.50,656.17V696.77M135.50,656.17V696.77M149.50,656.17V696.77M155.50,656.17V696.77M162.50,656.17V696.77M169.50,656.17V696.77M176.50,656.17V696.77M189.50,656.17V696.77M196.50,656.17V696.77M203.50,656.17V696.77M210.50,656.17V696.77M217.50,656.17V696.77M230.50,656.17V696.77M237.50,656.17V696.77" stroke="#b8f4b8" stroke-width="1" fill="none"/>
<path d="M101.30,656.50H238.10M101.30,696.50H238.10" stroke="#f4f4f4" stroke-width="1" fill="none"/>
<text x="6.7" y="665.7" font-size="11.5" fill="#dedede">GLONASS R21</text>
<text x="6.7" y="679.8" font-size="11.5" fill="#dedede">El 13 Az 66</text>
<text x="6.7" y="693.7" font-size="11.5" fill="#dedede">C/N0 45.0</text>
<text x="241.0" y="665.7" font-size="11.5" fill="#dedede">55</text>
<text x="241.0" y="679.8" font-size="11.5" fill="#dedede">dB</text>
<text x="241.0" y="693.7" font-size="11.5" fill="#dedede">5</text>
<rect x="79.00" y="663.57" width="22.00" height="7.67" fill="#fff"/><rect x="79.00" y="671.24" width="22.00" height="7.67" fill="#1414e6"/><rect x="79.00" y="678.90" width="22.00" height="7.67" fill="#ee1818"/>
<rect x="101.30" y="703.32" width="136.30" height="36.42" fill="#08c008"/>
<path d="M108.50,699.14V739.74M114.50,699.14V739.74M121.50,699.14V739.74M128.50,699.14V739.74M135.50,699.14V739.74M149.50,699.14V739.74M155.50,699.14V739.74M162.50,699.14V739.74M169.50,699.14V739.74M176.50,699.14V739.74M189.50,699.14V739.74M196.50,699.14V739.74M203.50,699.14V739.74M210.50,699.14V739.74M217.50,699.14V739.74M230.50,699.14V739.74M237.50,699.14V739.74" stroke="#b8f4b8" stroke-width="1" fill="none"/>
<path d="M101.30,699.50H238.10M101.30,739.50H238.10" stroke="#f4f4f4" stroke-width="1" fill="none"/>
<text x="6.7" y="708.6" font-size="11.5" fill="#dedede">GLONASS R2</text>
<text x="6.7" y="722.7" font-size="11.5" fill="#dedede">El 58 Az 189</text>
<text x="6.7" y="736.6" font-size="11.5" fill="#dedede">C/N0 51.0</text>
<text x="241.0" y="708.6" font-size="11.5" fill="#dedede">55</text>
<text x="241.0" y="722.7" font-size="11.5" fill="#dedede">dB</text>
<text x="241.0" y="736.6" font-size="11.5" fill="#dedede">5</text>
<rect x="79.00" y="706.54" width="22.00" height="7.67" fill="#fff"/><rect x="79.00" y="714.21" width="22.00" height="7.67" fill="#1414e6"/><rect x="79.00" y="721.87" width="22.00" height="7.67" fill="#ee1818"/>
<rect x="101.30" y="763.01" width="136.30" height="19.70" fill="#08c008"/>
<path d="M108.50,742.11V782.71M114.50,742.11V782.71M121.50,742.11V782.71M128.50,742.11V782.71M135.50,742.11V782.71M149.50,742.11V782.71M155.50,742.11V782.71M162.50,742.11V782.71M169.50,742.11V782.71M176.50,742.11V782.71M189.50,742.11V782.71M196.50,742.11V782.71M203.50,742.11V782.71M210.50,742.11V782.71M217.50,742.11V782.71M230.50,742.11V782.71M237.50,742.11V782.71" stroke="#b8f4b8" stroke-width="1" fill="none"/>
<path d="M101.30,742.50H238.10M101.30,782.50H238.10" stroke="#f4f4f4" stroke-width="1" fill="none"/>
<text x="6.7" y="751.6" font-size="11.5" fill="#dedede">GLONASS R13</text>
<text x="6.7" y="765.7" font-size="11.5" fill="#dedede">El 31 Az 232</text>
<text x="6.7" y="779.6" font-size="11.5" fill="#dedede">C/N0 30.0</text>
<text x="241.0" y="751.6" font-size="11.5" fill="#dedede">55</text>
<text x="241.0" y="765.7" font-size="11.5" fill="#dedede">dB</text>
<text x="241.0" y="779.6" font-size="11.5" fill="#dedede">5</text>
<rect x="79.00" y="749.51" width="22.00" height="7.67" fill="#fff"/><rect x="79.00" y="757.18" width="22.00" height="7.67" fill="#1414e6"/><rect x="79.00" y="764.84" width="22.00" height="7.67" fill="#ee1818"/>
<rect x="101.30" y="820.31" width="136.30" height="5.37" fill="#08c008"/>
<path d="M108.50,785.08V825.68M114.50,785.08V825.68M121.50,785.08V825.68M128.50,785.08V825.68M135.50,785.08V825.68M149.50,785.08V825.68M155.50,785.08V825.68M162.50,785.08V825.68M169.50,785.08V825.68M176.50,785.08V825.68M189.50,785.08V825.68M196.50,785.08V825.68M203.50,785.08V825.68M210.50,785.08V825.68M217.50,785.08V825.68M230.50,785.08V825.68M237.50,785.08V825.68" stroke="#b8f4b8" stroke-width="1" fill="none"/>
<path d="M101.30,785.50H238.10M101.30,825.50H238.10" stroke="#f4f4f4" stroke-width="1" fill="none"/>
<text x="6.7" y="794.6" font-size="11.5" fill="#dedede">GLONASS R1</text>
<text x="6.7" y="808.7" font-size="11.5" fill="#dedede">El 8 Az 161</text>
<text x="6.7" y="822.6" font-size="11.5" fill="#dedede">C/N0 12.0</text>
<text x="241.0" y="794.6" font-size="11.5" fill="#dedede">55</text>
<text x="241.0" y="808.7" font-size="11.5" fill="#dedede">dB</text>
<text x="241.0" y="822.6" font-size="11.5" fill="#dedede">5</text>
<rect x="79.00" y="792.48" width="22.00" height="7.67" fill="#fff"/><rect x="79.00" y="800.15" width="22.00" height="7.67" fill="#1414e6"/><rect x="79.00" y="807.81" width="22.00" height="7.67" fill="#ee1818"/>
<rect x="101.30" y="842.58" width="136.30" height="26.07" fill="#08c008"/>
<path d="M108.50,828.05V868.65M114.50,828.05V868.65M121.50,828.05V868.65M128.50,828.05V868.65M135.50,828.05V868.65M149.50,828.05V868.65M155.50,828.05V868.65M162.50,828.05V868.65M169.50,828.05V868.65M176.50,828.05V868.65M189.50,828.05V868.65M196.50,828.05V868.65M203.50,828.05V868.65M210.50,828.05V868.65M217.50,828.05V868.65M230.50,828.05V868.65M237.50,828.05V868.65" stroke="#b8f4b8" stroke-width="1" fill="none"/>
<path d="M101.30,828.50H238.10M101.30,868.50H238.10" stroke="#f4f4f4" stroke-width="1" fill="none"/>
<text x="6.7" y="837.5" font-size="11.5" fill="#dedede">GLONASS R19</text>
<text x="6.7" y="851.6" font-size="11.5" fill="#dedede">El 6 Az 328</text>
<text x="6.7" y="865.5" font-size="11.5" fill="#dedede">C/N0 38.0</text>
<text x="241.0" y="837.5" font-size="11.5" fill="#dedede">55</text>
<text x="241.0" y="851.6" font-size="11.5" fill="#dedede">dB</text>
<text x="241.0" y="865.5" font-size="11.5" fill="#dedede">5</text>
<rect x="79.00" y="835.45" width="22.00" height="7.67" fill="#fff"/><rect x="79.00" y="843.12" width="22.00" height="7.67" fill="#1414e6"/><rect x="79.00" y="850.78" width="22.00" height="7.67" fill="#ee1818"/>
<rect x="101.30" y="878.39" width="136.30" height="33.23" fill="#08c008"/>
<path d="M108.50,871.02V911.62M114.50,871.02V911.62M121.50,871.02V911.62M128.50,871.02V911.62M135.50,871.02V911.62M149.50,871.02V911.62M155.50,871.02V911.62M162.50,871.02V911.62M169.50,871.02V911.62M176.50,871.02V911.62M189.50,871.02V911.62M196.50,871.02V911.62M203.50,871.02V911.62M210.50,871.02V911.62M217.50,871.02V911.62M230.50,871.02V911.62M237.50,871.02V911.62" stroke="#b8f4b8" stroke-width="1" fill="none"/>
<path d="M101.30,871.50H238.10M101.30,911.50H238.10" stroke="#f4f4f4" stroke-width="1" fill="none"/>
<text x="6.7" y="880.5" font-size="11.5" fill="#dedede">GLONASS R3</text>
<text x="6.7" y="894.6" font-size="11.5" fill="#dedede">El 53 Az 307</text>
<text x="6.7" y="908.5" font-size="11.5" fill="#dedede">C/N0 47.0</text>
<text x="241.0" y="880.5" font-size="11.5" fill="#dedede">55</text>
<text x="241.0" y="894.6" font-size="11.5" fill="#dedede">dB</text>
<text x="241.0" y="908.5" font-size="11.5" fill="#dedede">5</text>
<rect x="79.00" y="878.42" width="22.00" height="7.67" fill="#fff"/><rect x="79.00" y="886.09" width="22.00" height="7.67" fill="#1414e6"/><rect x="79.00" y="893.75" width="22.00" height="7.67" fill="#ee1818"/>
<rect x="101.30" y="923.75" width="136.30" height="30.84" fill="#08c008"/>
<path d="M108.50,913.99V954.59M114.50,913.99V954.59M121.50,913.99V954.59M128.50,913.99V954.59M135.50,913.99V954.59M149.50,913.99V954.59M155.50,913.99V954.59M162.50,913.99V954.59M169.50,913.99V954.59M176.50,913.99V954.59M189.50,913.99V954.59M196.50,913.99V954.59M203.50,913.99V954.59M210.50,913.99V954.59M217.50,913.99V954.59M230.50,913.99V954.59M237.50,913.99V954.59" stroke="#b8f4b8" stroke-width="1" fill="none"/>
<path d="M101.30,913.50H238.10M101.30,954.50H238.10" stroke="#f4f4f4" stroke-width="1" fill="none"/>
<text x="6.7" y="923.5" font-size="11.5" fill="#dedede">GLONASS R11</text>
<text x="6.7" y="937.6" font-size="11.5" fill="#dedede">El 32 Az 51</text>
<text x="6.7" y="951.5" font-size="11.5" fill="#dedede">C/N0 44.0</text>
<text x="241.0" y="923.5" font-size="11.5" fill="#dedede">55</text>
<text x="241.0" y="937.6" font-size="11.5" fill="#dedede">dB</text>
<text x="241.0" y="951.5" font-size="11.5" fill="#dedede">5</text>
<rect x="79.00" y="921.39" width="22.00" height="7.67" fill="#fff"/><rect x="79.00" y="929.06" width="22.00" height="7.67" fill="#1414e6"/><rect x="79.00" y="936.72" width="22.00" height="7.67" fill="#ee1818"/>
<rect x="101.30" y="965.92" width="136.30" height="31.64" fill="#08c008"/>
<path d="M108.50,956.96V997.56M114.50,956.96V997.56M121.50,956.96V997.56M128.50,956.96V997.56M135.50,956.96V997.56M149.50,956.96V997.56M155.50,956.96V997.56M162.50,956.96V997.56M169.50,956.96V997.56M176.50,956.96V997.56M189.50,956.96V997.56M196.50,956.96V997.56M203.50,956.96V997.56M210.50,956.96V997.56M217.50,956.96V997.56M230.50,956.96V997.56M237.50,956.96V997.56" stroke="#b8f4b8" stroke-width="1" fill="none"/>
<path d="M101.30,956.50H238.10M101.30,997.50H238.10" stroke="#f4f4f4" stroke-width="1" fill="none"/>
<text x="6.7" y="966.5" font-size="11.5" fill="#dedede">GLONASS R12</text>
<text x="6.7" y="980.6" font-size="11.5" fill="#dedede">El 89 Az 234</text>
<text x="6.7" y="994.5" font-size="11.5" fill="#dedede">C/N0 45.0</text>
<text x="241.0" y="966.5" font-size="11.5" fill="#dedede">55</text>
<text x="241.0" y="980.6" font-size="11.5" fill="#dedede">dB</text>
<text x="241.0" y="994.5" font-size="11.5" fill="#dedede">5</text>
<rect x="79.00" y="964.36" width="22.00" height="7.67" fill="#fff"/><rect x="79.00" y="972.03" width="22.00" height="7.67" fill="#1414e6"/><rect x="79.00" y="979.69" width="22.00" height="7.67" fill="#ee1818"/>
<rect x="101.30" y="1010.48" width="136.30" height="30.05" fill="#08c008"/>
<path d="M108.50,999.93V1040.53M114.50,999.93V1040.53M121.50,999.93V1040.53M128.50,999.93V1040.53M135.50,999.93V1040.53M149.50,999.93V1040.53M155.50,999.93V1040.53M162.50,999.93V1040.53M169.50,999.93V1040.53M176.50,999.93V1040.53M189.50,999.93V1040.53M196.50,999.93V1040.53M203.50,999.93V1040.53M210.50,999.93V1040.53M217.50,999.93V1040.53M230.50,999.93V1040.53M237.50,999.93V1040.53" stroke="#b8f4b8" stroke-width="1" fill="none"/>
<path d="M101.30,999.50H238.10M101.30,1040.50H238.10" stroke="#f4f4f4" stroke-width="1" fill="none"/>
<text x="6.7" y="1009.4" font-size="11.5" fill="#dedede">GLONASS R20</text>
<text x="6.7" y="1023.5" font-size="11.5" fill="#dedede">El 20 Az 17</text>
<text x="6.7" y="1037.4" font-size="11.5" fill="#dedede">C/N0 43.0</text>
<text x="241.0" y="1009.4" font-size="11.5" fill="#dedede">55</text>
<text x="241.0" y="1023.5" font-size="11.5" fill="#dedede">dB</text>
<text x="241.0" y="1037.4" font-size="11.5" fill="#dedede">5</text>
<rect x="79.00" y="1007.33" width="22.00" height="7.67" fill="#fff"/><rect x="79.00" y="1015.00" width="22.00" height="7.67" fill="#1414e6"/><rect x="79.00" y="1022.66" width="22.00" height="7.67" fill="#ee1818"/>
<rect x="101.30" y="1050.27" width="136.30" height="33.23" fill="#0808c8"/>
<path d="M108.50,1042.90V1083.50M114.50,1042.90V1083.50M121.50,1042.90V1083.50M128.50,1042.90V1083.50M135.50,1042.90V1083.50M149.50,1042.90V1083.50M155.50,1042.90V1083.50M162.50,1042.90V1083.50M169.50,1042.90V1083.50M176.50,1042.90V1083.50M189.50,1042.90V1083.50M196.50,1042.90V1083.50M203.50,1042.90V1083.50M210.50,1042.90V1083.50M217.50,1042.90V1083.50M230.50,1042.90V1083.50M237.50,1042.90V1083.50" stroke="#b8f4b8" stroke-width="1" fill="none"/>
<path d="M101.30,1042.50H238.10M101.30,1083.50H238.10" stroke="#f4f4f4" stroke-width="1" fill="none"/>
<text x="6.7" y="1052.4" font-size="11.5" fill="#dedede">GPS G10</text>
<text x="6.7" y="1066.5" font-size="11.5" fill="#dedede">El 45 Az 282</text>
<text x="6.7" y="1080.4" font-size="11.5" fill="#dedede">C/N0 47.0</text>
<text x="241.0" y="1052.4" font-size="11.5" fill="#dedede">55</text>
<text x="241.0" y="1066.5" font-size="11.5" fill="#dedede">dB</text>
<text x="241.0" y="1080.4" font-size="11.5" fill="#dedede">5</text>
<rect x="79.00" y="1050.50" width="22.00" height="23.40" fill="#fff"/><rect x="79.00" y="1052.30" width="22.00" height="1.80" fill="#e85864"/><rect x="79.00" y="1055.90" width="22.00" height="1.80" fill="#e85864"/><rect x="79.00" y="1059.50" width="22.00" height="1.80" fill="#e85864"/><rect x="79.00" y="1063.10" width="22.00" height="1.80" fill="#e85864"/><rect x="79.00" y="1066.70" width="22.00" height="1.80" fill="#e85864"/><rect x="79.00" y="1070.30" width="22.00" height="1.80" fill="#e85864"/><rect x="79.00" y="1051.50" width="11.00" height="10.76" fill="#1010ee"/>
<rect x="101.30" y="1107.57" width="136.30" height="18.90" fill="#0808c8"/>
<path d="M108.50,1085.87V1126.47M114.50,1085.87V1126.47M121.50,1085.87V1126.47M128.50,1085.87V1126.47M135.50,1085.87V1126.47M149.50,1085.87V1126.47M155.50,1085.87V1126.47M162.50,1085.87V1126.47M169.50,1085.87V1126.47M176.50,1085.87V1126.47M189.50,1085.87V1126.47M196.50,1085.87V1126.47M203.50,1085.87V1126.47M210.50,1085.87V1126.47M217.50,1085.87V1126.47M230.50,1085.87V1126.47M237.50,1085.87V1126.47" stroke="#b8f4b8" stroke-width="1" fill="none"/>
<path d="M101.30,1085.50H238.10M101.30,1126.50H238.10" stroke="#f4f4f4" stroke-width="1" fill="none"/>
<text x="6.7" y="1095.4" font-size="11.5" fill="#dedede">GLONASS R4</text>
<text x="6.7" y="1109.5" font-size="11.5" fill="#dedede">El 4 Az 330</text>
<text x="6.7" y="1123.4" font-size="11.5" fill="#dedede">C/N0 29.0</text>
<text x="241.0" y="1095.4" font-size="11.5" fill="#dedede">55</text>
<text x="241.0" y="1109.5" font-size="11.5" fill="#dedede">dB</text>
<text x="241.0" y="1123.4" font-size="11.5" fill="#dedede">5</text>
<rect x="79.00" y="1093.27" width="22.00" height="7.67" fill="#fff"/><rect x="79.00" y="1100.94" width="22.00" height="7.67" fill="#1414e6"/><rect x="79.00" y="1108.60" width="22.00" height="7.67" fill="#ee1818"/>
</g>
<g font-family='"Liberation Sans", sans-serif'>
<rect x="267.70" y="181.80" width="345.30" height="945.90" fill="#000"/>
<rect x="269.50" y="313.66" width="15.00" height="798.84" fill="#08c008"/>
<rect x="284.50" y="518.59" width="15.00" height="593.91" fill="#08c008"/>
<rect x="299.50" y="406.81" width="14.00" height="705.69" fill="#08c008"/>
<rect x="313.50" y="649.00" width="16.00" height="463.50" fill="#08c008"/>
<rect x="329.50" y="425.44" width="15.00" height="687.06" fill="#08c008"/>
<rect x="344.50" y="406.81" width="14.00" height="705.69" fill="#08c008"/>
<rect x="358.50" y="425.44" width="16.00" height="687.06" fill="#08c008"/>
<rect x="374.50" y="462.70" width="14.00" height="649.80" fill="#08c008"/>
<rect x="388.50" y="276.40" width="15.00" height="836.10" fill="#08c008"/>
<rect x="403.50" y="313.66" width="16.00" height="798.84" fill="#08c008"/>
<rect x="419.50" y="332.29" width="14.00" height="780.21" fill="#08c008"/>
<rect x="433.50" y="369.55" width="15.00" height="742.95" fill="#08c008"/>
<rect x="448.50" y="257.77" width="16.00" height="854.73" fill="#08c008"/>
<rect x="464.50" y="649.00" width="14.00" height="463.50" fill="#08c008"/>
<rect x="478.50" y="984.34" width="15.00" height="128.16" fill="#08c008"/>
<rect x="493.50" y="499.96" width="16.00" height="612.54" fill="#08c008"/>
<rect x="509.50" y="332.29" width="14.00" height="780.21" fill="#08c008"/>
<rect x="523.50" y="388.18" width="15.00" height="724.32" fill="#08c008"/>
<rect x="538.50" y="369.55" width="15.00" height="742.95" fill="#08c008"/>
<rect x="553.50" y="406.81" width="15.00" height="705.69" fill="#08c008"/>
<rect x="568.50" y="332.29" width="15.00" height="780.21" fill="#0808c8"/>
<rect x="583.50" y="667.63" width="15.00" height="444.87" fill="#0808c8"/>
<path d="M269.50,183.50V1112.50M284.50,183.50V1112.50M299.50,183.50V1112.50M313.50,183.50V1112.50M329.50,183.50V1112.50M344.50,183.50V1112.50M358.50,183.50V1112.50M374.50,183.50V1112.50M388.50,183.50V1112.50M403.50,183.50V1112.50M419.50,183.50V1112.50M433.50,183.50V1112.50M448.50,183.50V1112.50M464.50,183.50V1112.50M478.50,183.50V1112.50M493.50,183.50V1112.50M509.50,183.50V1112.50M523.50,183.50V1112.50M538.50,183.50V1112.50M553.50,183.50V1112.50M568.50,183.50V1112.50M583.50,183.50V1112.50M598.50,183.50V1112.50M269.20,183.50H598.70M269.20,1112.50H598.70" stroke="#b4f2b4" stroke-width="1" fill="none"/>
<line x1="313.50" y1="667.50" x2="329.50" y2="667.50" stroke="#c8f4c8" stroke-width="1"/>
<line x1="388.50" y1="295.50" x2="403.50" y2="295.50" stroke="#c8f4c8" stroke-width="1"/>
<line x1="433.50" y1="350.50" x2="448.50" y2="350.50" stroke="#c8f4c8" stroke-width="1"/>
<line x1="464.50" y1="630.50" x2="478.50" y2="630.50" stroke="#c8f4c8" stroke-width="1"/>
<line x1="478.50" y1="965.50" x2="493.50" y2="965.50" stroke="#c8f4c8" stroke-width="1"/>
<line x1="478.50" y1="1075.50" x2="493.50" y2="1075.50" stroke="#c8f4c8" stroke-width="1"/>
<line x1="523.50" y1="369.50" x2="538.50" y2="369.50" stroke="#c8f4c8" stroke-width="1"/>
<line x1="583.50" y1="686.50" x2="598.50" y2="686.50" stroke="#c8f4c8" stroke-width="1"/>
<line x1="269.50" y1="313.50" x2="284.50" y2="313.50" stroke="#c0f4c0" stroke-width="1" opacity="0.8"/>
<line x1="284.50" y1="518.50" x2="299.50" y2="518.50" stroke="#c0f4c0" stroke-width="1" opacity="0.8"/>
<line x1="299.50" y1="406.50" x2="313.50" y2="406.50" stroke="#c0f4c0" stroke-width="1" opacity="0.8"/>
<line x1="313.50" y1="649.50" x2="329.50" y2="649.50" stroke="#c0f4c0" stroke-width="1" opacity="0.8"/>
<line x1="329.50" y1="425.50" x2="344.50" y2="425.50" stroke="#c0f4c0" stroke-width="1" opacity="0.8"/>
<line x1="344.50" y1="406.50" x2="358.50" y2="406.50" stroke="#c0f4c0" stroke-width="1" opacity="0.8"/>
<line x1="358.50" y1="425.50" x2="374.50" y2="425.50" stroke="#c0f4c0" stroke-width="1" opacity="0.8"/>
<line x1="374.50" y1="462.50" x2="388.50" y2="462.50" stroke="#c0f4c0" stroke-width="1" opacity="0.8"/>
<line x1="388.50" y1="276.50" x2="403.50" y2="276.50" stroke="#c0f4c0" stroke-width="1" opacity="0.8"/>
<line x1="403.50" y1="313.50" x2="419.50" y2="313.50" stroke="#c0f4c0" stroke-width="1" opacity="0.8"/>
<line x1="419.50" y1="332.50" x2="433.50" y2="332.50" stroke="#c0f4c0" stroke-width="1" opacity="0.8"/>
<line x1="433.50" y1="369.50" x2="448.50" y2="369.50" stroke="#c0f4c0" stroke-width="1" opacity="0.8"/>
<line x1="448.50" y1="257.50" x2="464.50" y2="257.50" stroke="#c0f4c0" stroke-width="1" opacity="0.8"/>
<line x1="464.50" y1="649.50" x2="478.50" y2="649.50" stroke="#c0f4c0" stroke-width="1" opacity="0.8"/>
<line x1="478.50" y1="984.50" x2="493.50" y2="984.50" stroke="#c0f4c0" stroke-width="1" opacity="0.8"/>
<line x1="493.50" y1="499.50" x2="509.50" y2="499.50" stroke="#c0f4c0" stroke-width="1" opacity="0.8"/>
<line x1="509.50" y1="332.50" x2="523.50" y2="332.50" stroke="#c0f4c0" stroke-width="1" opacity="0.8"/>
<line x1="523.50" y1="388.50" x2="538.50" y2="388.50" stroke="#c0f4c0" stroke-width="1" opacity="0.8"/>
<line x1="538.50" y1="369.50" x2="553.50" y2="369.50" stroke="#c0f4c0" stroke-width="1" opacity="0.8"/>
<line x1="553.50" y1="406.50" x2="568.50" y2="406.50" stroke="#c0f4c0" stroke-width="1" opacity="0.8"/>
<line x1="568.50" y1="332.50" x2="583.50" y2="332.50" stroke="#c0f4c0" stroke-width="1" opacity="0.8"/>
<line x1="583.50" y1="667.50" x2="598.50" y2="667.50" stroke="#c0f4c0" stroke-width="1" opacity="0.8"/>
<line x1="269.20" y1="276.50" x2="598.70" y2="276.50" stroke="#f4f4f4" stroke-width="1" stroke-dasharray="4,3"/>
<text x="599.5" y="280.4" font-size="11.5" fill="#dedede" textLength="11.5" lengthAdjust="spacingAndGlyphs">50</text>
<line x1="269.20" y1="462.50" x2="598.70" y2="462.50" stroke="#f4f4f4" stroke-width="1" stroke-dasharray="4,3"/>
<text x="599.5" y="466.7" font-size="11.5" fill="#dedede" textLength="11.5" lengthAdjust="spacingAndGlyphs">40</text>
<line x1="269.20" y1="649.50" x2="598.70" y2="649.50" stroke="#f4f4f4" stroke-width="1" stroke-dasharray="4,3"/>
<text x="599.5" y="653.0" font-size="11.5" fill="#dedede" textLength="11.5" lengthAdjust="spacingAndGlyphs">30</text>
<line x1="269.20" y1="835.50" x2="598.70" y2="835.50" stroke="#f4f4f4" stroke-width="1" stroke-dasharray="4,3"/>
<text x="599.5" y="839.3" font-size="11.5" fill="#dedede" textLength="11.5" lengthAdjust="spacingAndGlyphs">20</text>
<line x1="269.20" y1="1021.50" x2="598.70" y2="1021.50" stroke="#f4f4f4" stroke-width="1" stroke-dasharray="4,3"/>
<text x="599.5" y="1025.6" font-size="11.5" fill="#dedede" textLength="11.5" lengthAdjust="spacingAndGlyphs">10</text>
<text x="277.5" y="1109.4" font-size="11.5" fill="#0a7a0a" text-anchor="middle" textLength="11" lengthAdjust="spacingAndGlyphs">48</text>
<text x="292.5" y="1109.4" font-size="11.5" fill="#0a7a0a" text-anchor="middle" textLength="11" lengthAdjust="spacingAndGlyphs">37</text>
<text x="307.5" y="1109.4" font-size="11.5" fill="#0a7a0a" text-anchor="middle" textLength="11" lengthAdjust="spacingAndGlyphs">43</text>
<text x="321.5" y="1109.4" font-size="11.5" fill="#0a7a0a" text-anchor="middle" textLength="11" lengthAdjust="spacingAndGlyphs">30</text>
<text x="337.5" y="1109.4" font-size="11.5" fill="#0a7a0a" text-anchor="middle" textLength="11" lengthAdjust="spacingAndGlyphs">42</text>
<text x="352.5" y="1109.4" font-size="11.5" fill="#0a7a0a" text-anchor="middle" textLength="11" lengthAdjust="spacingAndGlyphs">43</text>
<text x="366.5" y="1109.4" font-size="11.5" fill="#0a7a0a" text-anchor="middle" textLength="11" lengthAdjust="spacingAndGlyphs">42</text>
<text x="382.5" y="1109.4" font-size="11.5" fill="#0a7a0a" text-anchor="middle" textLength="11" lengthAdjust="spacingAndGlyphs">40</text>
<text x="396.5" y="1109.4" font-size="11.5" fill="#0a7a0a" text-anchor="middle" textLength="11" lengthAdjust="spacingAndGlyphs">50</text>
<text x="411.5" y="1109.4" font-size="11.5" fill="#0a7a0a" text-anchor="middle" textLength="11" lengthAdjust="spacingAndGlyphs">48</text>
<text x="427.5" y="1109.4" font-size="11.5" fill="#0a7a0a" text-anchor="middle" textLength="11" lengthAdjust="spacingAndGlyphs">47</text>
<text x="441.5" y="1109.4" font-size="11.5" fill="#0a7a0a" text-anchor="middle" textLength="11" lengthAdjust="spacingAndGlyphs">45</text>
<text x="456.5" y="1109.4" font-size="11.5" fill="#0a7a0a" text-anchor="middle" textLength="11" lengthAdjust="spacingAndGlyphs">51</text>
<text x="472.5" y="1109.4" font-size="11.5" fill="#0a7a0a" text-anchor="middle" textLength="11" lengthAdjust="spacingAndGlyphs">30</text>
<text x="486.5" y="1109.4" font-size="11.5" fill="#0a7a0a" text-anchor="middle" textLength="11" lengthAdjust="spacingAndGlyphs">12</text>
<text x="501.5" y="1109.4" font-size="11.5" fill="#0a7a0a" text-anchor="middle" textLength="11" lengthAdjust="spacingAndGlyphs">38</text>
<text x="517.5" y="1109.4" font-size="11.5" fill="#0a7a0a" text-anchor="middle" textLength="11" lengthAdjust="spacingAndGlyphs">47</text>
<text x="531.5" y="1109.4" font-size="11.5" fill="#0a7a0a" text-anchor="middle" textLength="11" lengthAdjust="spacingAndGlyphs">44</text>
<text x="546.5" y="1109.4" font-size="11.5" fill="#0a7a0a" text-anchor="middle" textLength="11" lengthAdjust="spacingAndGlyphs">45</text>
<text x="561.5" y="1109.4" font-size="11.5" fill="#0a7a0a" text-anchor="middle" textLength="11" lengthAdjust="spacingAndGlyphs">43</text>
<text x="576.5" y="1109.4" font-size="11.5" fill="#1a1a90" text-anchor="middle" textLength="11" lengthAdjust="spacingAndGlyphs">47</text>
<text x="591.5" y="1109.4" font-size="11.5" fill="#1a1a90" text-anchor="middle" textLength="11" lengthAdjust="spacingAndGlyphs">29</text>
<svg x="269.00" y="1113" width="15.58" height="14.5" overflow="hidden"><text x="1.5" y="11.1" font-size="11" fill="#dedede">G5</text></svg>
<svg x="284.00" y="1113" width="15.58" height="14.5" overflow="hidden"><text x="1.5" y="11.1" font-size="11" fill="#dedede">G9</text></svg>
<svg x="299.00" y="1113" width="15.58" height="14.5" overflow="hidden"><text x="1.5" y="11.1" font-size="11" fill="#dedede">G8</text></svg>
<svg x="313.00" y="1113" width="15.58" height="14.5" overflow="hidden"><text x="1.5" y="11.1" font-size="11" fill="#dedede">G28</text></svg>
<svg x="329.00" y="1113" width="15.58" height="14.5" overflow="hidden"><text x="1.5" y="11.1" font-size="11" fill="#dedede">G27</text></svg>
<svg x="344.00" y="1113" width="15.58" height="14.5" overflow="hidden"><text x="1.5" y="11.1" font-size="11" fill="#dedede">G15</text></svg>
<svg x="358.00" y="1113" width="15.58" height="14.5" overflow="hidden"><text x="1.5" y="11.1" font-size="11" fill="#dedede">G20</text></svg>
<svg x="374.00" y="1113" width="15.58" height="14.5" overflow="hidden"><text x="1.5" y="11.1" font-size="11" fill="#dedede">G21</text></svg>
<svg x="388.00" y="1113" width="15.58" height="14.5" overflow="hidden"><text x="1.5" y="11.1" font-size="11" fill="#dedede">G30</text></svg>
<svg x="403.00" y="1113" width="15.58" height="14.5" overflow="hidden"><text x="1.5" y="11.1" font-size="11" fill="#dedede">G7</text></svg>
<svg x="419.00" y="1113" width="15.58" height="14.5" overflow="hidden"><text x="1.5" y="11.1" font-size="11" fill="#dedede">G13</text></svg>
<svg x="433.00" y="1113" width="15.58" height="14.5" overflow="hidden"><text x="1.5" y="11.1" font-size="11" fill="#dedede">R21</text></svg>
<svg x="448.00" y="1113" width="15.58" height="14.5" overflow="hidden"><text x="1.5" y="11.1" font-size="11" fill="#dedede">R2</text></svg>
<svg x="464.00" y="1113" width="15.58" height="14.5" overflow="hidden"><text x="1.5" y="11.1" font-size="11" fill="#dedede">R13</text></svg>
<svg x="478.00" y="1113" width="15.58" height="14.5" overflow="hidden"><text x="1.5" y="11.1" font-size="11" fill="#dedede">R1</text></svg>
<svg x="493.00" y="1113" width="15.58" height="14.5" overflow="hidden"><text x="1.5" y="11.1" font-size="11" fill="#dedede">R19</text></svg>
<svg x="509.00" y="1113" width="15.58" height="14.5" overflow="hidden"><text x="1.5" y="11.1" font-size="11" fill="#dedede">R3</text></svg>
<svg x="523.00" y="1113" width="15.58" height="14.5" overflow="hidden"><text x="1.5" y="11.1" font-size="11" fill="#dedede">R11</text></svg>
<svg x="538.00" y="1113" width="15.58" height="14.5" overflow="hidden"><text x="1.5" y="11.1" font-size="11" fill="#dedede">R12</text></svg>
<svg x="553.00" y="1113" width="15.58" height="14.5" overflow="hidden"><text x="1.5" y="11.1" font-size="11" fill="#dedede">R20</text></svg>
<svg x="568.00" y="1113" width="15.58" height="14.5" overflow="hidden"><text x="1.5" y="11.1" font-size="11" fill="#dedede">G10</text></svg>
<svg x="583.00" y="1113" width="15.58" height="14.5" overflow="hidden"><text x="1.5" y="11.1" font-size="11" fill="#dedede">R4</text></svg>
<text x="600.0" y="1124.1" font-size="11" fill="#dedede" textLength="12" lengthAdjust="spacingAndGlyphs">dB</text>
</g>
<g font-family='"Liberation Sans", sans-serif'>
<rect x="619.50" y="165.00" width="1097.50" height="944.00" fill="#000"/>
<g fill="none" stroke="#e8e8e8" stroke-width="0.85"><ellipse cx="1168.85" cy="637.45" rx="418.45" ry="425.05"/><ellipse cx="1168.85" cy="637.45" rx="371.96" ry="377.82"/><ellipse cx="1168.85" cy="637.45" rx="325.46" ry="330.59"/><ellipse cx="1168.85" cy="637.45" rx="278.97" ry="283.37"/><ellipse cx="1168.85" cy="637.45" rx="232.47" ry="236.14"/><ellipse cx="1168.85" cy="637.45" rx="185.98" ry="188.91"/><ellipse cx="1168.85" cy="637.45" rx="139.48" ry="141.68"/><ellipse cx="1168.85" cy="637.45" rx="92.99" ry="94.46"/><ellipse cx="1168.85" cy="637.45" rx="46.49" ry="47.23"/><line x1="1168.85" y1="637.45" x2="1168.85" y2="212.40"/><line x1="1168.85" y1="637.45" x2="1277.15" y2="226.88"/><line x1="1168.85" y1="637.45" x2="1378.07" y2="269.35"/><line x1="1168.85" y1="637.45" x2="1464.74" y2="336.89"/><line x1="1168.85" y1="637.45" x2="1531.24" y2="424.92"/><line x1="1168.85" y1="637.45" x2="1573.04" y2="527.44"/><line x1="1168.85" y1="637.45" x2="1587.30" y2="637.45"/><line x1="1168.85" y1="637.45" x2="1573.04" y2="747.46"/><line x1="1168.85" y1="637.45" x2="1531.24" y2="849.97"/><line x1="1168.85" y1="637.45" x2="1464.74" y2="938.01"/><line x1="1168.85" y1="637.45" x2="1378.07" y2="1005.55"/><line x1="1168.85" y1="637.45" x2="1277.15" y2="1048.02"/><line x1="1168.85" y1="637.45" x2="1168.85" y2="1062.50"/><line x1="1168.85" y1="637.45" x2="1060.55" y2="1048.02"/><line x1="1168.85" y1="637.45" x2="959.62" y2="1005.55"/><line x1="1168.85" y1="637.45" x2="872.96" y2="938.01"/><line x1="1168.85" y1="637.45" x2="806.46" y2="849.98"/><line x1="1168.85" y1="637.45" x2="764.66" y2="747.46"/><line x1="1168.85" y1="637.45" x2="750.40" y2="637.45"/><line x1="1168.85" y1="637.45" x2="764.66" y2="527.44"/><line x1="1168.85" y1="637.45" x2="806.46" y2="424.92"/><line x1="1168.85" y1="637.45" x2="872.96" y2="336.89"/><line x1="1168.85" y1="637.45" x2="959.62" y2="269.35"/><line x1="1168.85" y1="637.45" x2="1060.55" y2="226.88"/></g>
<path d="M967.52,755.52 A232.47,236.14 0 0 1 944.30,698.57 L989.21,686.34 A185.98,188.91 0 0 0 1007.79,731.91 Z" fill="#1cfc80"/>
<path d="M1490.97,826.36 A371.96,377.82 0 0 1 1431.86,904.61 L1398.99,871.22 A325.46,330.59 0 0 0 1450.71,802.75 Z" fill="#10b8ff"/>
<path d="M1450.71,472.15 A325.46,330.59 0 0 1 1483.22,551.89 L1438.31,564.11 A278.97,283.37 0 0 0 1410.44,495.77 Z" fill="#10fac8"/>
<path d="M1241.05,911.16 A278.97,283.37 0 0 1 1168.85,920.82 L1168.85,873.59 A232.47,236.14 0 0 0 1229.02,865.54 Z" fill="#0818f8"/>
<path d="M1354.83,310.25 A371.96,377.82 0 0 1 1431.86,370.29 L1398.99,403.68 A325.46,330.59 0 0 0 1331.58,351.15 Z" fill="#18f8dc"/>
<path d="M764.66,527.44 A418.45,425.05 0 0 1 806.46,424.92 L846.73,448.54 A371.96,377.82 0 0 0 809.57,539.66 Z" fill="#18f8d8"/>
<path d="M886.99,472.15 A325.46,330.59 0 0 1 938.71,403.68 L971.59,437.08 A278.97,283.37 0 0 0 927.26,495.77 Z" fill="#18f8dc"/>
<path d="M982.87,310.25 A371.96,377.82 0 0 1 1072.58,272.50 L1084.61,318.12 A325.46,330.59 0 0 0 1006.12,351.15 Z" fill="#08f8f8"/>
<path d="M1201.73,670.85 A46.49,47.23 0 0 1 1192.10,678.35 L1168.85,637.45 Z" fill="#18d040"/>
<path d="M1348.49,588.56 A185.98,188.91 0 0 1 1354.83,637.45 L1308.33,637.45 A139.48,141.68 0 0 0 1303.58,600.78 Z" fill="#1cfc80"/>
<path d="M944.30,576.33 A232.47,236.14 0 0 1 967.52,519.38 L1007.79,542.99 A185.98,188.91 0 0 0 989.21,588.56 Z" fill="#1cf88c"/>
<path d="M1490.97,448.54 A371.96,377.82 0 0 1 1528.13,539.66 L1483.22,551.89 A325.46,330.59 0 0 0 1450.71,472.15 Z" fill="#20f8a0"/>
<path d="M1168.85,826.36 A185.98,188.91 0 0 1 1120.72,819.92 L1132.75,774.31 A139.48,141.68 0 0 0 1168.85,779.13 Z" fill="#18f868"/>
<path d="M971.59,837.82 A278.97,283.37 0 0 1 927.26,779.13 L967.52,755.52 A232.47,236.14 0 0 0 1004.47,804.43 Z" fill="#1048ff"/>
<path d="M1378.07,1005.55 A418.45,425.05 0 0 1 1277.15,1048.02 L1265.12,1002.40 A371.96,377.82 0 0 0 1354.83,964.65 Z" fill="#c40cff"/>
<path d="M872.96,336.89 A418.45,425.05 0 0 1 959.62,269.35 L982.87,310.25 A371.96,377.82 0 0 0 905.84,370.29 Z" fill="#18a8ff"/>
<path d="M1007.79,542.99 A185.98,188.91 0 0 1 1037.34,503.87 L1070.22,537.26 A139.48,141.68 0 0 0 1048.05,566.61 Z" fill="#1cf88c"/>
<path d="M1366.11,437.08 A278.97,283.37 0 0 1 1410.44,495.77 L1370.18,519.38 A232.47,236.14 0 0 0 1333.23,470.47 Z" fill="#20f8a0"/>
<path d="M1135.97,670.85 A46.49,47.23 0 0 1 1128.58,661.06 L1168.85,637.45 Z" fill="#28f0c0"/>
<path d="M1253.09,318.12 A325.46,330.59 0 0 1 1331.58,351.15 L1308.33,392.05 A278.97,283.37 0 0 0 1241.05,363.74 Z" fill="#18f8dc"/>
<path d="M936.38,637.45 A232.47,236.14 0 0 1 944.30,576.33 L989.21,588.56 A185.98,188.91 0 0 0 982.87,637.45 Z" fill="#1cf88c"/>
<path d="M959.62,269.35 A418.45,425.05 0 0 1 1060.55,226.88 L1072.58,272.50 A371.96,377.82 0 0 0 982.87,310.25 Z" fill="#0808f0"/>
<ellipse cx="1168.85" cy="637.45" rx="418.45" ry="425.05" fill="none" stroke="#e8e8e8" stroke-width="0.85"/>
<text x="975.6" y="722.8" font-size="11" fill="#002020" text-anchor="middle" textLength="11" lengthAdjust="spacingAndGlyphs" opacity="0.85">48</text>
<text x="1445.5" y="857.1" font-size="11" fill="#002020" text-anchor="middle" textLength="11" lengthAdjust="spacingAndGlyphs" opacity="0.85">36</text>
<text x="1448.1" y="524.0" font-size="11" fill="#002020" text-anchor="middle" textLength="11" lengthAdjust="spacingAndGlyphs" opacity="0.85">43</text>
<text x="1202.2" y="899.0" font-size="11" fill="#002020" text-anchor="middle" textLength="11" lengthAdjust="spacingAndGlyphs" opacity="0.85">30</text>
<text x="1381.1" y="360.4" font-size="11" fill="#002020" text-anchor="middle" textLength="11" lengthAdjust="spacingAndGlyphs" opacity="0.85">42</text>
<text x="803.7" y="487.8" font-size="11" fill="#002020" text-anchor="middle" textLength="11" lengthAdjust="spacingAndGlyphs" opacity="0.85">42</text>
<text x="929.1" y="454.6" font-size="11" fill="#002020" text-anchor="middle" textLength="11" lengthAdjust="spacingAndGlyphs" opacity="0.85">42</text>
<text x="1035.4" y="314.2" font-size="11" fill="#002020" text-anchor="middle" textLength="11" lengthAdjust="spacingAndGlyphs" opacity="0.85">40</text>
<text x="1330.2" y="619.9" font-size="11" fill="#002020" text-anchor="middle" textLength="11" lengthAdjust="spacingAndGlyphs" opacity="0.85">48</text>
<text x="975.6" y="560.1" font-size="11" fill="#002020" text-anchor="middle" textLength="11" lengthAdjust="spacingAndGlyphs" opacity="0.85">47</text>
<text x="1491.0" y="505.9" font-size="11" fill="#002020" text-anchor="middle" textLength="11" lengthAdjust="spacingAndGlyphs" opacity="0.85">45</text>
<text x="1147.6" y="805.3" font-size="11" fill="#002020" text-anchor="middle" textLength="11" lengthAdjust="spacingAndGlyphs" opacity="0.85">51</text>
<text x="966.0" y="799.6" font-size="11" fill="#002020" text-anchor="middle" textLength="11" lengthAdjust="spacingAndGlyphs" opacity="0.85">29</text>
<text x="1320.1" y="1012.3" font-size="11" fill="#002020" text-anchor="middle" textLength="11" lengthAdjust="spacingAndGlyphs" opacity="0.85">13</text>
<text x="928.3" y="323.0" font-size="11" fill="#002020" text-anchor="middle" textLength="11" lengthAdjust="spacingAndGlyphs" opacity="0.85">36</text>
<text x="1039.7" y="540.8" font-size="11" fill="#002020" text-anchor="middle" textLength="11" lengthAdjust="spacingAndGlyphs" opacity="0.85">47</text>
<text x="1371.7" y="483.3" font-size="11" fill="#002020" text-anchor="middle" textLength="11" lengthAdjust="spacingAndGlyphs" opacity="0.85">45</text>
<text x="1284.5" y="357.8" font-size="11" fill="#002020" text-anchor="middle" textLength="11" lengthAdjust="spacingAndGlyphs" opacity="0.85">42</text>
<text x="961.4" y="613.7" font-size="11" fill="#002020" text-anchor="middle" textLength="11" lengthAdjust="spacingAndGlyphs" opacity="0.85">47</text>
<text x="1017.6" y="270.6" font-size="11" fill="#002020" text-anchor="middle" textLength="11" lengthAdjust="spacingAndGlyphs" opacity="0.85">28</text>
<text x="1280.0" y="224.3" font-size="12" fill="#e8e8e8" text-anchor="middle" textLength="15.5" lengthAdjust="spacingAndGlyphs">15°</text>
<text x="1381.5" y="267.0" font-size="12" fill="#e8e8e8" text-anchor="middle" textLength="15.5" lengthAdjust="spacingAndGlyphs">30°</text>
<text x="1474.3" y="335.7" font-size="12" fill="#e8e8e8" text-anchor="middle" textLength="15.5" lengthAdjust="spacingAndGlyphs">45°</text>
<text x="1541.7" y="427.3" font-size="12" fill="#e8e8e8" text-anchor="middle" textLength="15.5" lengthAdjust="spacingAndGlyphs">60°</text>
<text x="1584.0" y="530.3" font-size="12" fill="#e8e8e8" text-anchor="middle" textLength="15.5" lengthAdjust="spacingAndGlyphs">75°</text>
<text x="1586.0" y="752.3" font-size="12" fill="#e8e8e8" text-anchor="middle" textLength="21" lengthAdjust="spacingAndGlyphs">105°</text>
<text x="1545.0" y="857.3" font-size="12" fill="#e8e8e8" text-anchor="middle" textLength="21" lengthAdjust="spacingAndGlyphs">120°</text>
<text x="1477.0" y="948.3" font-size="12" fill="#e8e8e8" text-anchor="middle" textLength="21" lengthAdjust="spacingAndGlyphs">135°</text>
<text x="1388.0" y="1018.3" font-size="12" fill="#e8e8e8" text-anchor="middle" textLength="21" lengthAdjust="spacingAndGlyphs">150°</text>
<text x="1285.0" y="1059.3" font-size="12" fill="#e8e8e8" text-anchor="middle" textLength="21" lengthAdjust="spacingAndGlyphs">165°</text>
<text x="1053.0" y="1059.3" font-size="12" fill="#e8e8e8" text-anchor="middle" textLength="21" lengthAdjust="spacingAndGlyphs">195°</text>
<text x="952.0" y="1018.3" font-size="12" fill="#e8e8e8" text-anchor="middle" textLength="21" lengthAdjust="spacingAndGlyphs">210°</text>
<text x="860.0" y="948.3" font-size="12" fill="#e8e8e8" text-anchor="middle" textLength="21" lengthAdjust="spacingAndGlyphs">225°</text>
<text x="791.0" y="857.3" font-size="12" fill="#e8e8e8" text-anchor="middle" textLength="21" lengthAdjust="spacingAndGlyphs">240°</text>
<text x="748.0" y="752.3" font-size="12" fill="#e8e8e8" text-anchor="middle" textLength="21" lengthAdjust="spacingAndGlyphs">255°</text>
<text x="748.0" y="530.3" font-size="12" fill="#e8e8e8" text-anchor="middle" textLength="21" lengthAdjust="spacingAndGlyphs">285°</text>
<text x="791.0" y="427.3" font-size="12" fill="#e8e8e8" text-anchor="middle" textLength="21" lengthAdjust="spacingAndGlyphs">300°</text>
<text x="861.0" y="335.3" font-size="12" fill="#e8e8e8" text-anchor="middle" textLength="21" lengthAdjust="spacingAndGlyphs">315°</text>
<text x="952.0" y="267.3" font-size="12" fill="#e8e8e8" text-anchor="middle" textLength="21" lengthAdjust="spacingAndGlyphs">330°</text>
<text x="1053.0" y="224.3" font-size="12" fill="#e8e8e8" text-anchor="middle" textLength="21" lengthAdjust="spacingAndGlyphs">345°</text>
<text x="1224.0" y="213.3" font-size="12" fill="#e8e8e8" text-anchor="middle" textLength="10.5" lengthAdjust="spacingAndGlyphs">0°</text>
<text x="1217.0" y="261.3" font-size="12" fill="#e8e8e8" text-anchor="middle" textLength="15.5" lengthAdjust="spacingAndGlyphs">10°</text>
<text x="1212.0" y="307.3" font-size="12" fill="#e8e8e8" text-anchor="middle" textLength="15.5" lengthAdjust="spacingAndGlyphs">20°</text>
<text x="1206.0" y="354.3" font-size="12" fill="#e8e8e8" text-anchor="middle" textLength="15.5" lengthAdjust="spacingAndGlyphs">30°</text>
<text x="1201.0" y="401.3" font-size="12" fill="#e8e8e8" text-anchor="middle" textLength="15.5" lengthAdjust="spacingAndGlyphs">40°</text>
<text x="1194.0" y="448.3" font-size="12" fill="#e8e8e8" text-anchor="middle" textLength="15.5" lengthAdjust="spacingAndGlyphs">50°</text>
<text x="1188.0" y="494.3" font-size="12" fill="#e8e8e8" text-anchor="middle" textLength="15.5" lengthAdjust="spacingAndGlyphs">60°</text>
<text x="1182.0" y="541.3" font-size="12" fill="#e8e8e8" text-anchor="middle" textLength="15.5" lengthAdjust="spacingAndGlyphs">70°</text>
<text x="1175.0" y="589.3" font-size="12" fill="#e8e8e8" text-anchor="middle" textLength="15.5" lengthAdjust="spacingAndGlyphs">80°</text>
<text x="1168.0" y="210.3" font-size="12" fill="#e8e8e8" text-anchor="middle">N</text>
<text x="1593.0" y="640.3" font-size="12" fill="#e8e8e8" text-anchor="middle">E</text>
<text x="1167.0" y="1073.3" font-size="12" fill="#e8e8e8" text-anchor="middle">S</text>
<text x="740.0" y="640.3" font-size="12" fill="#e8e8e8" text-anchor="middle">W</text>
<ellipse cx="964.2" cy="593.3" rx="17.6" ry="13.9" fill="#0818d0"/><line x1="938.60" y1="578.06" x2="938.60" y2="608.46" stroke="#1420a8" stroke-width="2.3"/><line x1="989.80" y1="578.06" x2="989.80" y2="608.46" stroke="#1420a8" stroke-width="2.3"/><line x1="938.70" y1="593.26" x2="947.20" y2="593.26" stroke="#1420a8" stroke-width="1.3"/><line x1="981.20" y1="593.26" x2="989.70" y2="593.26" stroke="#1420a8" stroke-width="1.3"/><text x="963.7" y="599.9" font-size="22.8" fill="#b8c4ff" text-anchor="middle" textLength="44.0" lengthAdjust="spacingAndGlyphs">G10</text>
<ellipse cx="968.9" cy="285.7" rx="17.6" ry="13.9" fill="#0818d0"/><line x1="943.32" y1="270.51" x2="943.32" y2="300.91" stroke="#1420a8" stroke-width="2.3"/><line x1="994.52" y1="270.51" x2="994.52" y2="300.91" stroke="#1420a8" stroke-width="2.3"/><line x1="943.42" y1="285.71" x2="951.92" y2="285.71" stroke="#1420a8" stroke-width="1.3"/><line x1="985.92" y1="285.71" x2="994.42" y2="285.71" stroke="#1420a8" stroke-width="1.3"/><text x="968.4" y="292.3" font-size="22.8" fill="#b8c4ff" text-anchor="middle" textLength="29.7" lengthAdjust="spacingAndGlyphs">R4</text>
<ellipse cx="995.7" cy="739.0" rx="17.6" ry="13.9" fill="#14ba14"/><line x1="970.11" y1="723.79" x2="970.11" y2="754.19" stroke="#30ac40" stroke-width="2.3"/><line x1="1021.31" y1="723.79" x2="1021.31" y2="754.19" stroke="#30ac40" stroke-width="2.3"/><line x1="970.21" y1="738.99" x2="978.71" y2="738.99" stroke="#30ac40" stroke-width="1.3"/><line x1="1012.71" y1="738.99" x2="1021.21" y2="738.99" stroke="#30ac40" stroke-width="1.3"/><text x="995.2" y="745.6" font-size="22.8" fill="#b0ffac" text-anchor="middle" textLength="31.0" lengthAdjust="spacingAndGlyphs">G5</text>
<ellipse cx="1457.9" cy="835.5" rx="17.6" ry="13.9" fill="#14ba14"/><line x1="1432.34" y1="820.32" x2="1432.34" y2="850.72" stroke="#30ac40" stroke-width="2.3"/><line x1="1483.54" y1="820.32" x2="1483.54" y2="850.72" stroke="#30ac40" stroke-width="2.3"/><line x1="1432.44" y1="835.52" x2="1440.94" y2="835.52" stroke="#30ac40" stroke-width="1.3"/><line x1="1474.94" y1="835.52" x2="1483.44" y2="835.52" stroke="#30ac40" stroke-width="1.3"/><text x="1457.4" y="842.1" font-size="22.8" fill="#b0ffac" text-anchor="middle" textLength="31.0" lengthAdjust="spacingAndGlyphs">G9</text>
<ellipse cx="1474.7" cy="524.4" rx="17.6" ry="13.9" fill="#14ba14"/><line x1="1449.08" y1="509.18" x2="1449.08" y2="539.58" stroke="#30ac40" stroke-width="2.3"/><line x1="1500.28" y1="509.18" x2="1500.28" y2="539.58" stroke="#30ac40" stroke-width="2.3"/><line x1="1449.18" y1="524.38" x2="1457.68" y2="524.38" stroke="#30ac40" stroke-width="1.3"/><line x1="1491.68" y1="524.38" x2="1500.18" y2="524.38" stroke="#30ac40" stroke-width="1.3"/><text x="1474.2" y="531.0" font-size="22.8" fill="#b0ffac" text-anchor="middle" textLength="31.0" lengthAdjust="spacingAndGlyphs">G8</text>
<ellipse cx="1208.9" cy="894.0" rx="17.6" ry="13.9" fill="#14ba14"/><line x1="1183.25" y1="878.80" x2="1183.25" y2="909.20" stroke="#30ac40" stroke-width="2.3"/><line x1="1234.45" y1="878.80" x2="1234.45" y2="909.20" stroke="#30ac40" stroke-width="2.3"/><line x1="1183.35" y1="894.00" x2="1191.85" y2="894.00" stroke="#30ac40" stroke-width="1.3"/><line x1="1225.85" y1="894.00" x2="1234.35" y2="894.00" stroke="#30ac40" stroke-width="1.3"/><text x="1208.4" y="900.6" font-size="22.8" fill="#b0ffac" text-anchor="middle" textLength="44.0" lengthAdjust="spacingAndGlyphs">G28</text>
<ellipse cx="1363.5" cy="355.0" rx="17.6" ry="13.9" fill="#14ba14"/><line x1="1337.93" y1="339.84" x2="1337.93" y2="370.24" stroke="#30ac40" stroke-width="2.3"/><line x1="1389.13" y1="339.84" x2="1389.13" y2="370.24" stroke="#30ac40" stroke-width="2.3"/><line x1="1338.03" y1="355.04" x2="1346.53" y2="355.04" stroke="#30ac40" stroke-width="1.3"/><line x1="1380.53" y1="355.04" x2="1389.03" y2="355.04" stroke="#30ac40" stroke-width="1.3"/><text x="1363.0" y="361.6" font-size="22.8" fill="#b0ffac" text-anchor="middle" textLength="44.0" lengthAdjust="spacingAndGlyphs">G27</text>
<ellipse cx="833.3" cy="463.8" rx="17.6" ry="13.9" fill="#14ba14"/><line x1="807.69" y1="448.58" x2="807.69" y2="478.98" stroke="#30ac40" stroke-width="2.3"/><line x1="858.89" y1="448.58" x2="858.89" y2="478.98" stroke="#30ac40" stroke-width="2.3"/><line x1="807.79" y1="463.78" x2="816.29" y2="463.78" stroke="#30ac40" stroke-width="1.3"/><line x1="850.29" y1="463.78" x2="858.79" y2="463.78" stroke="#30ac40" stroke-width="1.3"/><text x="832.8" y="470.4" font-size="22.8" fill="#b0ffac" text-anchor="middle" textLength="44.0" lengthAdjust="spacingAndGlyphs">G15</text>
<ellipse cx="939.4" cy="468.1" rx="17.6" ry="13.9" fill="#14ba14"/><line x1="913.80" y1="452.92" x2="913.80" y2="483.32" stroke="#30ac40" stroke-width="2.3"/><line x1="965.00" y1="452.92" x2="965.00" y2="483.32" stroke="#30ac40" stroke-width="2.3"/><line x1="913.90" y1="468.12" x2="922.40" y2="468.12" stroke="#30ac40" stroke-width="1.3"/><line x1="956.40" y1="468.12" x2="964.90" y2="468.12" stroke="#30ac40" stroke-width="1.3"/><text x="938.9" y="474.7" font-size="22.8" fill="#b0ffac" text-anchor="middle" textLength="44.0" lengthAdjust="spacingAndGlyphs">G20</text>
<ellipse cx="1029.5" cy="287.1" rx="17.6" ry="13.9" fill="#14ba14"/><line x1="1003.91" y1="271.94" x2="1003.91" y2="302.34" stroke="#30ac40" stroke-width="2.3"/><line x1="1055.11" y1="271.94" x2="1055.11" y2="302.34" stroke="#30ac40" stroke-width="2.3"/><line x1="1004.01" y1="287.14" x2="1012.51" y2="287.14" stroke="#30ac40" stroke-width="1.3"/><line x1="1046.51" y1="287.14" x2="1055.01" y2="287.14" stroke="#30ac40" stroke-width="1.3"/><text x="1029.0" y="293.7" font-size="22.8" fill="#b0ffac" text-anchor="middle" textLength="44.0" lengthAdjust="spacingAndGlyphs">G21</text>
<ellipse cx="1191.0" cy="661.6" rx="17.6" ry="13.9" fill="#14ba14"/><line x1="1165.45" y1="646.43" x2="1165.45" y2="676.83" stroke="#30ac40" stroke-width="2.3"/><line x1="1216.65" y1="646.43" x2="1216.65" y2="676.83" stroke="#30ac40" stroke-width="2.3"/><line x1="1165.55" y1="661.63" x2="1174.05" y2="661.63" stroke="#30ac40" stroke-width="1.3"/><line x1="1208.05" y1="661.63" x2="1216.55" y2="661.63" stroke="#30ac40" stroke-width="1.3"/><text x="1190.5" y="668.2" font-size="22.8" fill="#b0ffac" text-anchor="middle" textLength="44.0" lengthAdjust="spacingAndGlyphs">G30</text>
<ellipse cx="1341.0" cy="597.1" rx="17.6" ry="13.9" fill="#14ba14"/><line x1="1315.40" y1="581.88" x2="1315.40" y2="612.28" stroke="#30ac40" stroke-width="2.3"/><line x1="1366.60" y1="581.88" x2="1366.60" y2="612.28" stroke="#30ac40" stroke-width="2.3"/><line x1="1315.50" y1="597.08" x2="1324.00" y2="597.08" stroke="#30ac40" stroke-width="1.3"/><line x1="1358.00" y1="597.08" x2="1366.50" y2="597.08" stroke="#30ac40" stroke-width="1.3"/><text x="1340.5" y="603.7" font-size="22.8" fill="#b0ffac" text-anchor="middle" textLength="31.0" lengthAdjust="spacingAndGlyphs">G7</text>
<ellipse cx="957.8" cy="563.6" rx="17.6" ry="13.9" fill="#14ba14"/><line x1="932.24" y1="548.45" x2="932.24" y2="578.85" stroke="#30ac40" stroke-width="2.3"/><line x1="983.44" y1="548.45" x2="983.44" y2="578.85" stroke="#30ac40" stroke-width="2.3"/><line x1="932.34" y1="563.65" x2="940.84" y2="563.65" stroke="#30ac40" stroke-width="1.3"/><line x1="974.84" y1="563.65" x2="983.34" y2="563.65" stroke="#30ac40" stroke-width="1.3"/><text x="957.3" y="570.2" font-size="22.8" fill="#b0ffac" text-anchor="middle" textLength="44.0" lengthAdjust="spacingAndGlyphs">G13</text>
<ellipse cx="1495.9" cy="489.5" rx="17.6" ry="13.9" fill="#14ba14"/><line x1="1470.31" y1="474.34" x2="1470.31" y2="504.74" stroke="#30ac40" stroke-width="2.3"/><line x1="1521.51" y1="474.34" x2="1521.51" y2="504.74" stroke="#30ac40" stroke-width="2.3"/><line x1="1470.41" y1="489.54" x2="1478.91" y2="489.54" stroke="#30ac40" stroke-width="1.3"/><line x1="1512.91" y1="489.54" x2="1521.41" y2="489.54" stroke="#30ac40" stroke-width="1.3"/><text x="1495.4" y="496.1" font-size="22.8" fill="#b0ffac" text-anchor="middle" textLength="42.7" lengthAdjust="spacingAndGlyphs">R21</text>
<ellipse cx="1145.6" cy="786.7" rx="17.6" ry="13.9" fill="#14ba14"/><line x1="1119.98" y1="771.52" x2="1119.98" y2="801.92" stroke="#30ac40" stroke-width="2.3"/><line x1="1171.18" y1="771.52" x2="1171.18" y2="801.92" stroke="#30ac40" stroke-width="2.3"/><line x1="1120.08" y1="786.72" x2="1128.58" y2="786.72" stroke="#30ac40" stroke-width="1.3"/><line x1="1162.58" y1="786.72" x2="1171.08" y2="786.72" stroke="#30ac40" stroke-width="1.3"/><text x="1145.1" y="793.3" font-size="22.8" fill="#b0ffac" text-anchor="middle" textLength="29.7" lengthAdjust="spacingAndGlyphs">R2</text>
<ellipse cx="952.7" cy="809.0" rx="17.6" ry="13.9" fill="#14ba14"/><line x1="927.09" y1="793.80" x2="927.09" y2="824.20" stroke="#30ac40" stroke-width="2.3"/><line x1="978.29" y1="793.80" x2="978.29" y2="824.20" stroke="#30ac40" stroke-width="2.3"/><line x1="927.19" y1="809.00" x2="935.69" y2="809.00" stroke="#30ac40" stroke-width="1.3"/><line x1="969.69" y1="809.00" x2="978.19" y2="809.00" stroke="#30ac40" stroke-width="1.3"/><text x="952.2" y="815.6" font-size="22.8" fill="#b0ffac" text-anchor="middle" textLength="42.7" lengthAdjust="spacingAndGlyphs">R13</text>
<ellipse cx="1293.0" cy="1003.6" rx="17.6" ry="13.9" fill="#14ba14"/><line x1="1267.37" y1="988.42" x2="1267.37" y2="1018.82" stroke="#30ac40" stroke-width="2.3"/><line x1="1318.57" y1="988.42" x2="1318.57" y2="1018.82" stroke="#30ac40" stroke-width="2.3"/><line x1="1267.47" y1="1003.62" x2="1275.97" y2="1003.62" stroke="#30ac40" stroke-width="1.3"/><line x1="1309.97" y1="1003.62" x2="1318.47" y2="1003.62" stroke="#30ac40" stroke-width="1.3"/><text x="1292.5" y="1010.2" font-size="22.8" fill="#b0ffac" text-anchor="middle" textLength="29.7" lengthAdjust="spacingAndGlyphs">R1</text>
<ellipse cx="961.9" cy="301.0" rx="17.6" ry="13.9" fill="#14ba14"/><line x1="936.29" y1="285.82" x2="936.29" y2="316.22" stroke="#30ac40" stroke-width="2.3"/><line x1="987.49" y1="285.82" x2="987.49" y2="316.22" stroke="#30ac40" stroke-width="2.3"/><line x1="936.39" y1="301.02" x2="944.89" y2="301.02" stroke="#30ac40" stroke-width="1.3"/><line x1="978.89" y1="301.02" x2="987.39" y2="301.02" stroke="#30ac40" stroke-width="1.3"/><text x="961.4" y="307.6" font-size="22.8" fill="#b0ffac" text-anchor="middle" textLength="42.7" lengthAdjust="spacingAndGlyphs">R19</text>
<ellipse cx="1031.5" cy="532.3" rx="17.6" ry="13.9" fill="#14ba14"/><line x1="1005.86" y1="517.09" x2="1005.86" y2="547.49" stroke="#30ac40" stroke-width="2.3"/><line x1="1057.06" y1="517.09" x2="1057.06" y2="547.49" stroke="#30ac40" stroke-width="2.3"/><line x1="1005.96" y1="532.29" x2="1014.46" y2="532.29" stroke="#30ac40" stroke-width="1.3"/><line x1="1048.46" y1="532.29" x2="1056.96" y2="532.29" stroke="#30ac40" stroke-width="1.3"/><text x="1031.0" y="538.9" font-size="22.8" fill="#b0ffac" text-anchor="middle" textLength="29.7" lengthAdjust="spacingAndGlyphs">R3</text>
<ellipse cx="1378.4" cy="465.1" rx="17.6" ry="13.9" fill="#14ba14"/><line x1="1352.82" y1="449.87" x2="1352.82" y2="480.27" stroke="#30ac40" stroke-width="2.3"/><line x1="1404.02" y1="449.87" x2="1404.02" y2="480.27" stroke="#30ac40" stroke-width="2.3"/><line x1="1352.92" y1="465.07" x2="1361.42" y2="465.07" stroke="#30ac40" stroke-width="1.3"/><line x1="1395.42" y1="465.07" x2="1403.92" y2="465.07" stroke="#30ac40" stroke-width="1.3"/><text x="1377.9" y="471.7" font-size="22.8" fill="#b0ffac" text-anchor="middle" textLength="42.7" lengthAdjust="spacingAndGlyphs">R11</text>
<ellipse cx="1165.1" cy="640.2" rx="17.6" ry="13.9" fill="#14ba14"/><line x1="1139.49" y1="625.03" x2="1139.49" y2="655.43" stroke="#30ac40" stroke-width="2.3"/><line x1="1190.69" y1="625.03" x2="1190.69" y2="655.43" stroke="#30ac40" stroke-width="2.3"/><line x1="1139.59" y1="640.23" x2="1148.09" y2="640.23" stroke="#30ac40" stroke-width="1.3"/><line x1="1182.09" y1="640.23" x2="1190.59" y2="640.23" stroke="#30ac40" stroke-width="1.3"/><text x="1164.6" y="646.8" font-size="22.8" fill="#b0ffac" text-anchor="middle" textLength="42.7" lengthAdjust="spacingAndGlyphs">R12</text>
<ellipse cx="1264.0" cy="321.3" rx="17.6" ry="13.9" fill="#14ba14"/><line x1="1238.41" y1="306.10" x2="1238.41" y2="336.50" stroke="#30ac40" stroke-width="2.3"/><line x1="1289.61" y1="306.10" x2="1289.61" y2="336.50" stroke="#30ac40" stroke-width="2.3"/><line x1="1238.51" y1="321.30" x2="1247.01" y2="321.30" stroke="#30ac40" stroke-width="1.3"/><line x1="1281.01" y1="321.30" x2="1289.51" y2="321.30" stroke="#30ac40" stroke-width="1.3"/><text x="1263.5" y="327.9" font-size="22.8" fill="#b0ffac" text-anchor="middle" textLength="42.7" lengthAdjust="spacingAndGlyphs">R20</text>
</g>
<g font-family='"Liberation Sans", sans-serif'>
<rect x="1723.50" y="181.70" width="144.80" height="946.50" fill="#000"/>
<clipPath id="rpclip"><rect x="1729.5" y="182" width="60" height="140"/></clipPath>
<text x="1726.8" y="198.0" font-size="11" fill="#dedede" clip-path="url(#rpclip)">Longitude</text>
<rect x="1789.10" y="186.90" width="73.90" height="11.80" fill="#424242"/>
<text x="1726.8" y="210.9" font-size="11" fill="#dedede" clip-path="url(#rpclip)">Latitude</text>
<rect x="1789.10" y="199.80" width="73.90" height="11.80" fill="#424242"/>
<text x="1726.8" y="223.8" font-size="11" fill="#dedede" clip-path="url(#rpclip)">Altitude</text>
<rect x="1789.10" y="212.70" width="73.90" height="11.80" fill="#424242"/>
<text x="1726.8" y="236.7" font-size="11" fill="#dedede" clip-path="url(#rpclip)">TTFF</text>
<rect x="1789.10" y="225.60" width="73.90" height="11.80" fill="#424242"/>
<text x="1726.8" y="249.6" font-size="11" fill="#dedede" clip-path="url(#rpclip)">Fix Mode</text>
<rect x="1789.10" y="238.50" width="73.90" height="11.80" fill="#424242"/>
<text x="1726.8" y="262.5" font-size="11" fill="#dedede" clip-path="url(#rpclip)">3D Acc.</text>
<rect x="1789.10" y="251.40" width="73.90" height="11.80" fill="#424242"/>
<text x="1726.8" y="275.4" font-size="11" fill="#dedede" clip-path="url(#rpclip)">2D Acc.</text>
<rect x="1789.10" y="264.30" width="73.90" height="11.80" fill="#424242"/>
<text x="1726.8" y="288.3" font-size="11" fill="#dedede" clip-path="url(#rpclip)">PDOP</text>
<rect x="1789.10" y="277.20" width="73.90" height="11.80" fill="#424242"/>
<text x="1726.8" y="301.2" font-size="11" fill="#dedede" clip-path="url(#rpclip)">HDOP</text>
<rect x="1789.10" y="290.10" width="73.90" height="11.80" fill="#424242"/>
<text x="1726.8" y="314.1" font-size="11" fill="#dedede" clip-path="url(#rpclip)">Satellites</text>
<text x="1862.8" y="223.8" font-size="11" fill="#dedede" text-anchor="end" textLength="42.5" lengthAdjust="spacingAndGlyphs">25.000 m</text>
<text x="1862.8" y="249.6" font-size="11" fill="#34c034" text-anchor="end">3D</text>
<text x="1863.4" y="195.8" font-size="9" fill="#c8c8c8" text-anchor="end">°</text>
<text x="1863.4" y="208.7" font-size="9" fill="#c8c8c8" text-anchor="end">°</text>
<rect x="1843.00" y="189.30" width="1.20" height="0.90" fill="#c4c4c4"/>
<rect x="1847.00" y="189.30" width="3.00" height="0.90" fill="#c4c4c4"/>
<rect x="1853.00" y="189.30" width="3.00" height="0.90" fill="#c4c4c4"/>
<rect x="1810.00" y="196.80" width="2.00" height="0.90" fill="#c4c4c4"/>
<rect x="1815.00" y="196.80" width="1.00" height="0.90" fill="#c4c4c4"/>
<rect x="1818.00" y="196.80" width="1.00" height="0.90" fill="#c4c4c4"/>
<rect x="1822.00" y="196.80" width="3.50" height="0.90" fill="#c4c4c4"/>
<rect x="1830.00" y="196.80" width="1.00" height="0.90" fill="#c4c4c4"/>
<rect x="1833.00" y="196.80" width="3.50" height="0.90" fill="#c4c4c4"/>
<rect x="1848.00" y="196.80" width="3.00" height="0.90" fill="#c4c4c4"/>
<rect x="1853.00" y="196.80" width="3.00" height="0.90" fill="#c4c4c4"/>
<rect x="1811.00" y="202.20" width="4.00" height="0.90" fill="#c4c4c4"/>
<rect x="1816.00" y="202.20" width="5.00" height="0.90" fill="#c4c4c4"/>
<rect x="1825.00" y="202.20" width="4.00" height="0.90" fill="#c4c4c4"/>
<rect x="1832.00" y="202.20" width="3.00" height="0.90" fill="#c4c4c4"/>
<rect x="1837.00" y="202.20" width="4.50" height="0.90" fill="#c4c4c4"/>
<rect x="1844.00" y="202.20" width="3.50" height="0.90" fill="#c4c4c4"/>
<rect x="1850.00" y="202.20" width="3.50" height="0.90" fill="#c4c4c4"/>
<rect x="1856.00" y="202.20" width="1.00" height="0.90" fill="#c4c4c4"/>
<rect x="1811.00" y="210.00" width="2.50" height="0.90" fill="#c4c4c4"/>
<rect x="1816.00" y="210.00" width="1.00" height="0.90" fill="#c4c4c4"/>
<rect x="1821.00" y="210.00" width="1.00" height="0.90" fill="#c4c4c4"/>
<rect x="1850.00" y="210.00" width="2.50" height="0.90" fill="#c4c4c4"/>
<rect x="1855.80" y="207.50" width="1.00" height="3.20" fill="#c4c4c4"/>
<text x="1789.5" y="288.3" font-size="11" fill="#dedede">0</text>
<rect x="1804.80" y="279.00" width="3.20" height="10.00" fill="#38b038"/>
<text x="1809.5" y="288.3" font-size="11" fill="#a8a8a8" textLength="13" lengthAdjust="spacingAndGlyphs">1.1</text>
<text x="1863.3" y="288.3" font-size="11" fill="#dedede" text-anchor="end">5</text>
<text x="1789.5" y="301.2" font-size="11" fill="#dedede">0</text>
<rect x="1796.70" y="291.90" width="3.80" height="10.00" fill="#38b038"/>
<text x="1802.0" y="301.2" font-size="11" fill="#dedede" textLength="13" lengthAdjust="spacingAndGlyphs">0.6</text>
<text x="1863.3" y="301.2" font-size="11" fill="#dedede" text-anchor="end">5</text>
<rect x="1789.10" y="304.20" width="2.00" height="10.80" fill="#40b040"/>
<rect x="1792.10" y="304.20" width="2.00" height="10.80" fill="#58b858"/>
<rect x="1795.10" y="304.20" width="2.00" height="10.80" fill="#40b040"/>
<rect x="1798.10" y="304.20" width="1.40" height="10.80" fill="#58b858"/>
<rect x="1802.80" y="304.20" width="2.00" height="10.80" fill="#40b040"/>
<rect x="1805.80" y="304.20" width="2.00" height="10.80" fill="#58b858"/>
<rect x="1808.80" y="304.20" width="2.00" height="10.80" fill="#40b040"/>
<rect x="1811.80" y="304.20" width="1.40" height="10.80" fill="#58b858"/>
<rect x="1816.50" y="304.20" width="2.00" height="10.80" fill="#40b040"/>
<rect x="1819.50" y="304.20" width="2.00" height="10.80" fill="#58b858"/>
<rect x="1822.50" y="304.20" width="2.00" height="10.80" fill="#40b040"/>
<rect x="1825.50" y="304.20" width="1.40" height="10.80" fill="#58b858"/>
<rect x="1830.20" y="304.20" width="2.00" height="10.80" fill="#40b040"/>
<rect x="1833.20" y="304.20" width="2.00" height="10.80" fill="#58b858"/>
<rect x="1836.20" y="304.20" width="2.00" height="10.80" fill="#40b040"/>
<rect x="1839.20" y="304.20" width="1.40" height="10.80" fill="#58b858"/>
<rect x="1843.90" y="304.20" width="2.00" height="10.80" fill="#40b040"/>
<rect x="1846.90" y="304.20" width="2.00" height="10.80" fill="#58b858"/>
<rect x="1849.90" y="304.20" width="2.00" height="10.80" fill="#40b040"/>
<rect x="1852.90" y="304.20" width="1.40" height="10.80" fill="#58b858"/>
<rect x="1855.80" y="304.20" width="7.00" height="10.80" fill="#10108c"/>
</g>
<g font-family='"Liberation Sans", sans-serif'><rect x="0.00" y="1135.00" width="1872.00" height="17.50" fill="#ece9d8"/><line x1="0.00" y1="1152.40" x2="1872.00" y2="1152.40" stroke="#78868f" stroke-width="1.2"/><rect x="0.00" y="1153.00" width="1872.00" height="7.00" fill="#f6f9fc"/><text x="0.3" y="1147.8" font-size="11.5" fill="#000" textLength="29.5" lengthAdjust="spacingAndGlyphs">Ready</text><rect x="1387.00" y="1136.40" width="101.80" height="14.20" fill="#ece9d8"/><line x1="1387.00" y1="1136.90" x2="1488.80" y2="1136.90" stroke="#a8a594" stroke-width="1"/><line x1="1387.50" y1="1136.40" x2="1387.50" y2="1150.60" stroke="#a8a594" stroke-width="1"/><line x1="1387.00" y1="1150.40" x2="1488.80" y2="1150.40" stroke="#fff" stroke-width="1"/><line x1="1488.30" y1="1136.40" x2="1488.30" y2="1150.60" stroke="#fff" stroke-width="1"/><text x="1407.5" y="1147.8" font-size="11.5" fill="#000" textLength="55" lengthAdjust="spacingAndGlyphs">COM2 9600</text><rect x="1491.90" y="1136.40" width="54.10" height="14.20" fill="#ece9d8"/><line x1="1491.90" y1="1136.90" x2="1546.00" y2="1136.90" stroke="#a8a594" stroke-width="1"/><line x1="1492.40" y1="1136.40" x2="1492.40" y2="1150.60" stroke="#a8a594" stroke-width="1"/><line x1="1491.90" y1="1150.40" x2="1546.00" y2="1150.40" stroke="#fff" stroke-width="1"/><line x1="1545.50" y1="1136.40" x2="1545.50" y2="1150.60" stroke="#fff" stroke-width="1"/><text x="1493.5" y="1147.8" font-size="11.5" fill="#000" textLength="47" lengthAdjust="spacingAndGlyphs">u-blox M8</text><rect x="1549.30" y="1136.40" width="7.50" height="14.20" fill="#ece9d8"/><line x1="1549.30" y1="1136.90" x2="1556.80" y2="1136.90" stroke="#a8a594" stroke-width="1"/><line x1="1549.80" y1="1136.40" x2="1549.80" y2="1150.60" stroke="#a8a594" stroke-width="1"/><line x1="1549.30" y1="1150.40" x2="1556.80" y2="1150.40" stroke="#fff" stroke-width="1"/><line x1="1556.30" y1="1136.40" x2="1556.30" y2="1150.60" stroke="#fff" stroke-width="1"/><rect x="1559.70" y="1136.40" width="127.70" height="14.20" fill="#ece9d8"/><line x1="1559.70" y1="1136.90" x2="1687.40" y2="1136.90" stroke="#a8a594" stroke-width="1"/><line x1="1560.20" y1="1136.40" x2="1560.20" y2="1150.60" stroke="#a8a594" stroke-width="1"/><line x1="1559.70" y1="1150.40" x2="1687.40" y2="1150.40" stroke="#fff" stroke-width="1"/><line x1="1686.90" y1="1136.40" x2="1686.90" y2="1150.60" stroke="#fff" stroke-width="1"/><text x="1561.5" y="1147.8" font-size="11.5" fill="#000" textLength="56" lengthAdjust="spacingAndGlyphs">No file open</text><rect x="1690.40" y="1136.40" width="51.10" height="14.20" fill="#ece9d8"/><line x1="1690.40" y1="1136.90" x2="1741.50" y2="1136.90" stroke="#a8a594" stroke-width="1"/><line x1="1690.90" y1="1136.40" x2="1690.90" y2="1150.60" stroke="#a8a594" stroke-width="1"/><line x1="1690.40" y1="1150.40" x2="1741.50" y2="1150.40" stroke="#fff" stroke-width="1"/><line x1="1741.00" y1="1136.40" x2="1741.00" y2="1150.60" stroke="#fff" stroke-width="1"/><text x="1691.5" y="1147.8" font-size="11.5" fill="#000" textLength="28" lengthAdjust="spacingAndGlyphs">NMEA</text><rect x="1744.90" y="1136.40" width="47.10" height="14.20" fill="#ece9d8"/><line x1="1744.90" y1="1136.90" x2="1792.00" y2="1136.90" stroke="#a8a594" stroke-width="1"/><line x1="1745.40" y1="1136.40" x2="1745.40" y2="1150.60" stroke="#a8a594" stroke-width="1"/><line x1="1744.90" y1="1150.40" x2="1792.00" y2="1150.40" stroke="#fff" stroke-width="1"/><line x1="1791.50" y1="1136.40" x2="1791.50" y2="1150.60" stroke="#fff" stroke-width="1"/><text x="1746.5" y="1147.8" font-size="11.5" fill="#000" textLength="43" lengthAdjust="spacingAndGlyphs">00:00:52</text><rect x="1795.60" y="1136.40" width="42.90" height="14.20" fill="#ece9d8"/><line x1="1795.60" y1="1136.90" x2="1838.50" y2="1136.90" stroke="#a8a594" stroke-width="1"/><line x1="1796.10" y1="1136.40" x2="1796.10" y2="1150.60" stroke="#a8a594" stroke-width="1"/><line x1="1795.60" y1="1150.40" x2="1838.50" y2="1150.40" stroke="#fff" stroke-width="1"/><line x1="1838.00" y1="1136.40" x2="1838.00" y2="1150.60" stroke="#fff" stroke-width="1"/><text x="1797.5" y="1147.8" font-size="11.5" fill="#000" textLength="43" lengthAdjust="spacingAndGlyphs">19:22:03</text><rect x="1849.50" y="1136.40" width="22.50" height="14.20" fill="#ece9d8"/><line x1="1849.50" y1="1136.90" x2="1872.00" y2="1136.90" stroke="#a8a594" stroke-width="1"/><line x1="1850.00" y1="1136.40" x2="1850.00" y2="1150.60" stroke="#a8a594" stroke-width="1"/><line x1="1849.50" y1="1150.40" x2="1872.00" y2="1150.40" stroke="#fff" stroke-width="1"/><line x1="1871.50" y1="1136.40" x2="1871.50" y2="1150.60" stroke="#fff" stroke-width="1"/><rect x="1389.50" y="1142.20" width="16.00" height="1.60" fill="#1a7a1a"/><rect x="1393" y="1139.3" width="9" height="7.4" rx="2" fill="#38b838" stroke="#0a4a0a" stroke-width="1"/><line x1="1397.50" y1="1139.50" x2="1397.50" y2="1146.50" stroke="#0a4a0a" stroke-width="1"/><circle cx="1859" cy="1143.5" r="4.3" fill="#f0f060" stroke="#b0b070" stroke-width="1"/><text x="1657.5" y="1126.7" font-size="12.5" fill="#000" font-weight="bold" textLength="57" lengthAdjust="spacingAndGlyphs">Az - / El -</text></g>
<g font-family='"Liberation Sans", sans-serif'><g transform="translate(12.40,52.10) scale(0.95)"><path d="M3,1.8h6.5l3,3v9h-9.5z" fill="#fff" stroke="#000" stroke-width="1.1"/><path d="M9.5,1.8v3h3" fill="none" stroke="#000" stroke-width="1"/></g><g transform="translate(34.40,52.10) scale(0.95)"><rect x="1.5" y="1.5" width="13.5" height="13" fill="#6e6e42" stroke="#000" stroke-width="1.2"/><rect x="4" y="2.2" width="8.5" height="5.3" fill="#e8e8e0" stroke="#000" stroke-width="0.6"/><rect x="4" y="10" width="8" height="4.4" fill="#000"/><rect x="9.6" y="10.8" width="2.2" height="3" fill="#fff"/></g><g transform="translate(57.40,52.10) scale(0.95)"><path d="M1.5,14V4.5h4l1.5,1.5h5v2.5" fill="#ffffc8" stroke="#000" stroke-width="1.1"/><path d="M1.5,14l3.5,-5.5h10.5l-3.5,5.5z" fill="#848440" stroke="#000" stroke-width="1.1"/><path d="M9,2h5M14,2l-2.5,2.5M14.5,1.5v3" stroke="#000" stroke-width="1.1" fill="none"/></g><g transform="translate(97.90,52.10) scale(0.95)"><path d="M4.5,6V1.5h7.5v4.5" fill="#fff" stroke="#000" stroke-width="1.1"/><rect x="1" y="6" width="14.5" height="6" rx="1.5" fill="#e8e8e0" stroke="#000" stroke-width="1.2"/><path d="M3,12v2.5h10.5v-2.5" fill="#fff" stroke="#000" stroke-width="1.1"/><path d="M2,8.5h12M5,3.5h5" stroke="#000" stroke-width="1"/><circle cx="13.5" cy="7" r="1" fill="#c8c8a0"/></g><g transform="translate(119.40,52.10) scale(0.95)"><path d="M1.5,1.5h7.5l3,3v10h-10.5z" fill="#fff" stroke="#000" stroke-width="1.2"/><circle cx="10" cy="8.5" r="3.4" fill="#c8e6e6" stroke="#444" stroke-width="1.1"/><path d="M12.5,11.5l3,3" stroke="#000" stroke-width="2"/></g><g transform="translate(146.90,52.10) scale(0.95)"><path d="M5.5,1l4,9.5M10.5,1l-4,9.5" stroke="#b0ad9f" stroke-width="1.1" fill="none"/><circle cx="5.3" cy="12.6" r="2" fill="none" stroke="#b0ad9f" stroke-width="1.1"/><circle cx="10.7" cy="12.6" r="2" fill="none" stroke="#b0ad9f" stroke-width="1.1"/></g><g transform="translate(171.40,52.10) scale(0.95)"><path d="M1.5,1.5h5l2,2v6.5h-7z" fill="#fff" stroke="#000" stroke-width="1.1"/><path d="M7.5,5.5h5l2,2v6.5h-7z" fill="#fff" stroke="#000080" stroke-width="1.1"/><path d="M3,4h3M3,6h4M9,9.5h4M9,11.5h4" stroke="#000" stroke-width="1"/></g><g transform="translate(193.40,52.10) scale(0.95)"><rect x="1" y="2" width="12" height="11.5" rx="1" fill="#a8a598"/><rect x="4.5" y="1" width="5" height="2.5" fill="#a8a598"/><path d="M4,4h6" stroke="#ece9d8" stroke-width="0.9"/><rect x="7.5" y="7.5" width="7.5" height="7" fill="#ece9d8" stroke="#a8a598" stroke-width="1"/><path d="M9,10h4.5M9,12h4.5" stroke="#a8a598" stroke-width="0.9"/></g><g transform="translate(221.90,52.10) scale(0.95)"><rect x="1.5" y="2.5" width="13" height="11" fill="#f0b060" stroke="#802000" stroke-width="1.2"/><path d="M1.5,2.5l13,11M14.5,2.5l-13,11" stroke="#c83000" stroke-width="1.5"/><path d="M4,13l4,-4l4,4z" fill="#f8d890"/></g><path d="M79.7,59.1h5.6l-2.8,3z" fill="#000"/><line x1="91.40" y1="52.00" x2="91.40" y2="69.50" stroke="#c5c2b0" stroke-width="1"/><line x1="92.40" y1="52.00" x2="92.40" y2="69.50" stroke="#ffffff" stroke-width="1" opacity="0.6"/><line x1="142.50" y1="52.00" x2="142.50" y2="69.50" stroke="#c5c2b0" stroke-width="1"/><line x1="143.50" y1="52.00" x2="143.50" y2="69.50" stroke="#ffffff" stroke-width="1" opacity="0.6"/><line x1="215.50" y1="52.00" x2="215.50" y2="69.50" stroke="#c5c2b0" stroke-width="1"/><line x1="216.50" y1="52.00" x2="216.50" y2="69.50" stroke="#ffffff" stroke-width="1" opacity="0.6"/><rect x="654.00" y="49.50" width="21.50" height="22.00" fill="#f6f5f0"/><line x1="654.00" y1="50.00" x2="675.50" y2="50.00" stroke="#9a9788" stroke-width="1"/><line x1="654.50" y1="49.50" x2="654.50" y2="71.50" stroke="#9a9788" stroke-width="1"/><line x1="654.00" y1="71.00" x2="675.50" y2="71.00" stroke="#fff" stroke-width="1"/><line x1="675.00" y1="49.50" x2="675.00" y2="71.50" stroke="#fff" stroke-width="1"/><rect x="676.50" y="49.50" width="21.50" height="22.00" fill="#f6f5f0"/><line x1="676.50" y1="50.00" x2="698.00" y2="50.00" stroke="#9a9788" stroke-width="1"/><line x1="677.00" y1="49.50" x2="677.00" y2="71.50" stroke="#9a9788" stroke-width="1"/><line x1="676.50" y1="71.00" x2="698.00" y2="71.00" stroke="#fff" stroke-width="1"/><line x1="697.50" y1="49.50" x2="697.50" y2="71.50" stroke="#fff" stroke-width="1"/><rect x="721.00" y="49.50" width="22.00" height="22.00" fill="#f6f5f0"/><line x1="721.00" y1="50.00" x2="743.00" y2="50.00" stroke="#9a9788" stroke-width="1"/><line x1="721.50" y1="49.50" x2="721.50" y2="71.50" stroke="#9a9788" stroke-width="1"/><line x1="721.00" y1="71.00" x2="743.00" y2="71.00" stroke="#fff" stroke-width="1"/><line x1="742.50" y1="49.50" x2="742.50" y2="71.50" stroke="#fff" stroke-width="1"/><g transform="translate(264.40,52.10) scale(0.95)"><path d="M3.5,3h6.5l3.5,3.5v8.5h-10z" fill="#fff" stroke="#000" stroke-width="1.2"/><path d="M10,3v3.5h3.5" fill="none" stroke="#000" stroke-width="1"/><path d="M0.5,2.5l4.5,3M0.5,5.5l4.5,-3M2.8,1v5" stroke="#d8d820" stroke-width="1"/><rect x="5.2" y="10.5" width="6.5" height="2.8" fill="#8060b0" stroke="#000" stroke-width="0.8"/><rect x="7.2" y="7.5" width="2.5" height="3" fill="#fff" stroke="#000" stroke-width="0.8"/></g><g transform="translate(287.40,52.10) scale(0.95)"><path d="M3.5,3h6.5l3.5,3.5v8.5h-10z" fill="#fff" stroke="#000" stroke-width="1.2"/><path d="M10,3v3.5h3.5" fill="none" stroke="#000" stroke-width="1"/><path d="M0.5,2.5l4.5,3M0.5,5.5l4.5,-3M2.8,1v5" stroke="#d8d820" stroke-width="1"/><text x="8.4" y="8.3" font-size="6" font-weight="bold" text-anchor="middle" fill="#000">10</text><text x="8.4" y="13.6" font-size="6" font-weight="bold" text-anchor="middle" fill="#000">01</text></g><g transform="translate(308.90,52.10) scale(0.95)"><path d="M3.5,3h6.5l3.5,3.5v8.5h-10z" fill="#fff" stroke="#000" stroke-width="1.2"/><path d="M10,3v3.5h3.5" fill="none" stroke="#000" stroke-width="1"/><path d="M0.5,2.5l4.5,3M0.5,5.5l4.5,-3M2.8,1v5" stroke="#d8d820" stroke-width="1"/><path d="M5.5,8h6M5.5,10h2M8.5,10h3M5.5,12h3M9.5,12h2" stroke="#000" stroke-width="1.1" stroke-dasharray="2,0.8"/></g><g transform="translate(335.70,52.10) scale(0.95)"><rect x="1.5" y="2" width="13.5" height="12" fill="#fff" stroke="#000" stroke-width="1.3"/><rect x="1.5" y="2" width="13.5" height="2" fill="#000040"/><path d="M6,3.5v10.5M6,9h9" stroke="#000" stroke-width="1.2"/><rect x="7" y="5" width="7" height="3.2" fill="#c8d0e0"/><path d="M3,6h2M3,8.5h2M3,11h2" stroke="#000" stroke-width="0.9"/></g><g transform="translate(358.20,52.10) scale(0.95)"><rect x="1.5" y="2" width="13.5" height="12" fill="#f0efe6" stroke="#000" stroke-width="1.3"/><rect x="1.5" y="2" width="13.5" height="2" fill="#000040"/><path d="M6,3.5v10.5" stroke="#000" stroke-width="1.2"/><path d="M3,6h2M3,8h2M3,10h2M3,12h2" stroke="#555" stroke-width="0.9"/></g><g transform="translate(386.20,52.10) scale(0.95)"><rect x="1.5" y="2" width="13.5" height="12" fill="#fff" stroke="#000" stroke-width="1.3"/><rect x="1.5" y="2" width="13.5" height="2.2" fill="#000"/><text x="8.3" y="13" font-size="10.5" font-weight="bold" text-anchor="middle" fill="#000">Σ</text></g><g transform="translate(409.20,52.10) scale(0.95)"><rect x="1.5" y="2" width="13.5" height="12" fill="#fff" stroke="#000" stroke-width="1.3"/><rect x="1.5" y="2" width="13.5" height="2.2" fill="#000"/><path d="M3.5,6.2h9.5M3.5,8.4h9.5M3.5,10.6h9.5M3.5,12.6h9.5" stroke="#888" stroke-width="0.8" stroke-dasharray="1.2,0.8,5,0.8,2,0"/></g><g transform="translate(449.90,52.10) scale(0.95)"><ellipse cx="8" cy="8" rx="7.6" ry="6.4" fill="#c4ccd0" stroke="#182868" stroke-width="1.1"/><path d="M2,6.5c2.5,-2.5 5,-2.5 7.5,0c1.8,1.8 3.6,2 5,1.4" fill="none" stroke="#f4f6f8" stroke-width="1.8"/><path d="M0.9,9.3c4,1.6 10,1.6 14.2,0c-0.2,0.9 -0.5,1.6 -0.9,2.2c-4,1.2 -8.5,1.2 -12.4,0c-0.4,-0.6 -0.7,-1.3 -0.9,-2.2z" fill="#1a2a6c"/><path d="M1.9,11.5c3.9,1.2 8.4,1.2 12.2,0c-0.3,0.5 -0.7,0.9 -1.1,1.3c-3.3,0.9 -6.8,0.9 -10,0c-0.4,-0.4 -0.8,-0.8 -1.1,-1.3z" fill="#f0f4f8"/><path d="M3,12.8c3.2,0.9 6.8,0.9 10,0c-1.3,1.1 -3,1.7 -5,1.7c-2,0 -3.7,-0.6 -5,-1.7z" fill="#1a2a6c"/></g><g transform="translate(472.40,52.10) scale(0.95)"><rect x="1" y="2" width="14" height="12" fill="#000"/><path d="M1.5,2.8h8l-8,9z" fill="#347c34"/><path d="M2.5,10.5l6,-7" stroke="#a8e0a0" stroke-width="0.9"/><rect x="1" y="2" width="14" height="1" fill="#101058"/><path d="M2,13.5c2,-6 6,-9.5 11,-10.5" stroke="#fff" stroke-width="1.6" fill="none"/><path d="M8,13.5c0,-3 2,-5.5 6.5,-5.5v5.5z" fill="#2040c0"/><rect x="11.5" y="4" width="3" height="3" fill="#fff"/></g><g transform="translate(507.40,52.10) scale(0.95)"><rect x="1" y="2" width="14" height="12" fill="#000"/><rect x="1" y="1.5" width="14" height="1.4" fill="#101048"/><rect x="1" y="2.9" width="14" height="0.8" fill="#7070b0"/><path d="M2.5,12l3,-2.5l2,1l3,-4l2,2.5l1.5,-2" stroke="#2c8c34" stroke-width="1" fill="none" stroke-dasharray="2,0.6"/></g><g transform="translate(542.90,52.10) scale(0.95)"><rect x="1.5" y="2" width="13.5" height="12.5" fill="#000"/><rect x="1.5" y="1.5" width="13.5" height="1.4" fill="#101048"/><rect x="1.5" y="2.9" width="13.5" height="0.8" fill="#7070b0"/><path d="M3.5,14.5v-4.5M6,14.5v-8M8.5,14.5v-7M11,14.5v-5M13.5,14.5v-3.5" stroke="#38c838" stroke-width="1.6"/></g><g transform="translate(583.70,52.10) scale(0.95)"><rect x="1.2" y="2" width="13.6" height="12.3" fill="#000"/><rect x="1.2" y="1.6" width="13.6" height="1.4" fill="#101048"/><rect x="1.2" y="3" width="13.6" height="0.8" fill="#6868a8"/><path d="M7,6.5l2,4.5M8.5,6.5l1,1" stroke="#30c030" stroke-width="1.4"/><circle cx="5.3" cy="11.5" r="0.8" fill="#a04020"/></g><g transform="translate(606.70,52.10) scale(0.95)"><rect x="1.2" y="2" width="13.6" height="12.3" fill="#000"/><rect x="1.2" y="1.6" width="13.6" height="1.4" fill="#101048"/><rect x="1.2" y="3" width="13.6" height="0.8" fill="#6868a8"/><circle cx="8" cy="9" r="4.8" fill="none" stroke="#fff" stroke-width="1" stroke-dasharray="1.6,0.7"/><circle cx="8" cy="9" r="2.4" fill="none" stroke="#e0e0ff" stroke-width="0.9"/><circle cx="8" cy="9" r="0.9" fill="#fff"/></g><g transform="translate(633.70,52.10) scale(0.95)"><rect x="1.2" y="2" width="13.6" height="12.3" fill="#000"/><rect x="1.2" y="1.6" width="13.6" height="1.4" fill="#101048"/><rect x="1.2" y="3" width="13.6" height="0.8" fill="#6868a8"/><circle cx="8" cy="9" r="4.8" fill="none" stroke="#e8e8e8" stroke-width="1" stroke-dasharray="1.6,0.7"/><path d="M5,11l3,-5l3,5z" fill="none" stroke="#d0d0d0" stroke-width="0.9"/></g><g transform="translate(657.40,52.10) scale(0.95)"><rect x="1.5" y="3" width="13" height="11.3" fill="#70b070" stroke="#000" stroke-width="1.3"/><rect x="1.5" y="2" width="13" height="1.5" fill="#202060"/><path d="M4,6h2M8,7h2M11,5.5h2M5,10h2M9,11h3M4,12.5h2" stroke="#205020" stroke-width="1"/><path d="M1.5,5.5h1.2M1.5,8h1.2M1.5,10.5h1.2" stroke="#fff" stroke-width="0.8"/></g><g transform="translate(679.90,52.10) scale(0.95)"><rect x="1.5" y="3" width="13" height="11.3" fill="#000"/><rect x="1.5" y="2" width="13" height="1.4" fill="#303080"/><rect x="1.5" y="3.4" width="13" height="3.6" fill="#101030"/><path d="M3.7,14v-6M6.2,14v-4M8.7,14v-3M11.2,14v-5.5M13.2,14v-8" stroke="#40c840" stroke-width="1.7"/></g><g transform="translate(701.70,52.10) scale(0.95)"><rect x="1.2" y="2" width="13.6" height="12.3" fill="#000"/><rect x="1.2" y="1.6" width="13.6" height="1.4" fill="#101048"/><rect x="1.2" y="3" width="13.6" height="0.8" fill="#6868a8"/><path d="M3.5,5.5l1,4l1.5,2.5M8,6l2,-1l1.5,2l-1.5,1.5l1,2.5M12.5,7.5l1,1.5" stroke="#e8e8e8" stroke-width="1.3" fill="none" stroke-dasharray="2,0.8"/><path d="M2,13.7h3M10,13.7h3" stroke="#ccc" stroke-width="0.8"/></g><g transform="translate(724.40,52.10) scale(0.95)"><rect x="1.5" y="3" width="13" height="11.5" fill="#000"/><rect x="1.5" y="2" width="13" height="1.4" fill="#303080"/><path d="M3,6.2h3M7,6.2h6.5M3,8.6h3M7,8.6h6.5M3,11h3M7,11h6.5M3,13.2h3M7,13.2h6.5" stroke="#d8d8d0" stroke-width="1"/></g><g transform="translate(746.20,52.10) scale(0.95)"><rect x="1.2" y="2" width="13.6" height="12.3" fill="#000"/><rect x="1.2" y="1.6" width="13.6" height="1.4" fill="#101048"/><rect x="1.2" y="3" width="13.6" height="0.8" fill="#6868a8"/><path d="M8,5v8M4,9h8.5M5.2,6.5l5.6,5M10.8,6.5l-5.6,5" stroke="#f0f0f0" stroke-width="1.1"/><circle cx="8" cy="9" r="1.6" fill="#fff"/></g><g transform="translate(768.70,52.10) scale(0.95)"><rect x="1.2" y="2" width="13.6" height="12.3" fill="#000"/><rect x="1.2" y="1.6" width="13.6" height="1.4" fill="#101048"/><rect x="1.2" y="3" width="13.6" height="0.8" fill="#6868a8"/><path d="M3,5l3.5,3M13,5l-3,3M3,13l3,-2.5M13,13l-3,-2.5M8,5v2M12,9h1.5" stroke="#e8e8e8" stroke-width="1"/><path d="M5,7l5,4.5" stroke="#fff" stroke-width="1.8"/></g><g transform="translate(791.20,52.10) scale(0.95)"><rect x="1.2" y="2" width="13.6" height="12.3" fill="#000"/><rect x="1.2" y="1.6" width="13.6" height="1.4" fill="#101048"/><rect x="1.2" y="3" width="13.6" height="0.8" fill="#6868a8"/><circle cx="8" cy="9" r="4.6" fill="none" stroke="#f0f0f0" stroke-width="1.2" stroke-dasharray="2.4,1"/><path d="M8.6,6.5l-2,2.5l2.5,1.2" stroke="#fff" stroke-width="1.1" fill="none"/></g><g transform="translate(813.70,52.10) scale(0.95)"><rect x="1.2" y="2" width="13.6" height="12.3" fill="#000"/><rect x="1.2" y="1.6" width="13.6" height="1.4" fill="#101048"/><rect x="1.2" y="3" width="13.6" height="0.8" fill="#6868a8"/><path d="M3,5l3.5,3M13,5l-3,3M3,13l3,-2.5M13,13l-3,-2.5M8,5v2M8,11v2.5M2.5,9h2" stroke="#e8e8e8" stroke-width="1"/><path d="M5.5,11.5l6,-4" stroke="#fff" stroke-width="1.8"/></g><path d="M431.7,59.1h5.6l-2.8,3z" fill="#000"/><path d="M495.2,59.1h5.6l-2.8,3z" fill="#000"/><path d="M530.7,59.1h5.6l-2.8,3z" fill="#000"/><path d="M565.7,59.1h5.6l-2.8,3z" fill="#000"/><line x1="329.50" y1="52.00" x2="329.50" y2="69.50" stroke="#c5c2b0" stroke-width="1"/><line x1="330.50" y1="52.00" x2="330.50" y2="69.50" stroke="#ffffff" stroke-width="1" opacity="0.6"/><line x1="380.50" y1="52.00" x2="380.50" y2="69.50" stroke="#c5c2b0" stroke-width="1"/><line x1="381.50" y1="52.00" x2="381.50" y2="69.50" stroke="#ffffff" stroke-width="1" opacity="0.6"/><line x1="443.80" y1="52.00" x2="443.80" y2="69.50" stroke="#c5c2b0" stroke-width="1"/><line x1="444.80" y1="52.00" x2="444.80" y2="69.50" stroke="#ffffff" stroke-width="1" opacity="0.6"/><line x1="577.50" y1="52.00" x2="577.50" y2="69.50" stroke="#c5c2b0" stroke-width="1"/><line x1="578.50" y1="52.00" x2="578.50" y2="69.50" stroke="#ffffff" stroke-width="1" opacity="0.6"/><line x1="628.00" y1="52.00" x2="628.00" y2="69.50" stroke="#c5c2b0" stroke-width="1"/><line x1="629.00" y1="52.00" x2="629.00" y2="69.50" stroke="#ffffff" stroke-width="1" opacity="0.6"/><g transform="translate(11.90,82.10) scale(0.95)"><path d="M0.5,7h4M0.5,9h4M11.5,7h4M11.5,9h4" stroke="#000" stroke-width="1"/><rect x="4" y="5" width="8" height="6" rx="2.4" fill="#48b048" stroke="#0a3a0a" stroke-width="1.1"/><path d="M8,5v6" stroke="#0a3a0a" stroke-width="1.2"/></g><g transform="translate(46.40,82.10) scale(0.95)"><path d="M1,12h2.5v-8h3v8h3v-8h3v8h3v-8" stroke="#000" stroke-width="1.3" fill="none" transform="translate(-0.5,0)"/></g><g transform="translate(88.40,82.10) scale(0.95)"><path d="M7,7.5l7.5,7" stroke="#000" stroke-width="2"/><path d="M7.5,8l1.5,1.4" stroke="#fff" stroke-width="0.8"/><path d="M3,3.5h1M8.5,2h1M5.5,5.5h1M2.5,7.5h1M11.5,5h1M5,1h1M9.5,7.5h1" stroke="#000" stroke-width="1"/><path d="M4,6.5h1M10,4h1M7,3h1" stroke="#b0b020" stroke-width="1"/></g><g transform="translate(110.40,82.10) scale(0.95)"><ellipse cx="7" cy="8.5" rx="2.6" ry="4.6" fill="#000"/><circle cx="7" cy="3.5" r="1.6" fill="#000"/><path d="M1,2.5l4.5,4M13,2.5l-4.5,4M1,14.5l4.5,-4M13,14.5l-4.5,-4M1.5,8.5h11" stroke="#000" stroke-width="1"/><path d="M9,5l3,-1l-1,3l3,1l-3,1.5l1,3l-3,-1.5z" fill="#e8e060" opacity="0.9"/></g><g transform="translate(132.90,82.10) scale(0.95)"><path d="M8,1v5" stroke="#000" stroke-width="1.8"/><path d="M5,5h6l-3,3.2z" fill="#000"/><path d="M1,14.5v-3l3,-2.5h8l3,2.5v3" stroke="#000" stroke-width="1.3" fill="none"/></g><g transform="translate(168.40,82.10) scale(0.95)"><path d="M4.2,1.8a1.5,1.5 0 0 1 3,0v9.7h-3z" fill="#983030" stroke="#000" stroke-width="0.9"/><path d="M2.4,11.3h6.6l-3.3,3.6z" fill="#a82020" stroke="#a82020" stroke-width="0.9" stroke-linejoin="round"/><text x="12.6" y="12.4" font-size="11.5" text-anchor="middle" fill="#000" stroke="#000" stroke-width="0.25" textLength="7.4" lengthAdjust="spacingAndGlyphs">H</text></g><g transform="translate(190.40,82.10) scale(0.95)"><path d="M4.2,1.8a1.5,1.5 0 0 1 3,0v9.7h-3z" fill="#f4f4b0" stroke="#000" stroke-width="0.9"/><path d="M2.4,11.3h6.6l-3.3,3.6z" fill="#d0c828" stroke="#d0c828" stroke-width="0.9" stroke-linejoin="round"/><text x="12.6" y="12.4" font-size="11.5" text-anchor="middle" fill="#000" stroke="#000" stroke-width="0.25" textLength="7.4" lengthAdjust="spacingAndGlyphs">W</text></g><g transform="translate(212.90,82.10) scale(0.95)"><path d="M4.2,1.8a1.5,1.5 0 0 1 3,0v9.7h-3z" fill="#e0e8f8" stroke="#000" stroke-width="0.9"/><path d="M2.4,11.3h6.6l-3.3,3.6z" fill="#101078" stroke="#101078" stroke-width="0.9" stroke-linejoin="round"/><text x="12.6" y="12.4" font-size="11.5" text-anchor="middle" fill="#000" stroke="#000" stroke-width="0.25" textLength="7.4" lengthAdjust="spacingAndGlyphs">C</text></g><g transform="translate(236.90,82.10) scale(0.95)"><path d="M4.2,1.8a1.5,1.5 0 0 1 3,0v9.7h-3z" fill="#c8b8a8" stroke="#000" stroke-width="0.9"/><path d="M2.4,11.3h6.6l-3.3,3.6z" fill="#101078" stroke="#101078" stroke-width="0.9" stroke-linejoin="round"/><rect x="8.5" y="2.5" width="9" height="9" fill="#fff" stroke="#000" stroke-width="1"/><path d="M13,4.5v5M10.5,7h5" stroke="#c02040" stroke-width="1.8"/></g><g transform="translate(259.90,82.10) scale(0.95)"><text x="3.6" y="7" font-size="8.5" font-weight="bold" text-anchor="middle" fill="#000">N</text><path d="M12,1.2v5.6M9.2,4h5.6" stroke="#c02040" stroke-width="1.9"/><path d="M7.6,0.5v7" stroke="#888" stroke-width="0.6"/><path d="M0.5,11h3M0.5,13h3M12.5,11h3M12.5,13h3" stroke="#000" stroke-width="1"/><rect x="3" y="9.5" width="3.6" height="5.2" rx="1.4" fill="#fff" stroke="#000" stroke-width="1.1"/><rect x="9.2" y="9.5" width="3.6" height="5.2" rx="1.4" fill="#fff" stroke="#000" stroke-width="1.1"/></g><g transform="translate(282.40,82.10) scale(0.95)"><text x="3.6" y="7" font-size="8.5" font-weight="bold" text-anchor="middle" fill="#000">M</text><path d="M12,1.2v5.6M9.2,4h5.6" stroke="#c02040" stroke-width="1.9"/><path d="M7.6,0.5v7" stroke="#888" stroke-width="0.6"/><g transform="translate(0,3.5)"><path d="M0.5,7h4M0.5,9h4M11.5,7h4M11.5,9h4" stroke="#000" stroke-width="1"/><rect x="4" y="5" width="8" height="6" rx="2.4" fill="#48b048" stroke="#0a3a0a" stroke-width="1.1"/><path d="M8,5v6" stroke="#0a3a0a" stroke-width="1.2"/></g></g><g transform="translate(309.90,82.10) scale(0.95)"><rect x="8.20" y="0.80" width="2.6" height="3" fill="#000" transform="rotate(0 9.5 7)"/><rect x="8.20" y="0.80" width="2.6" height="3" fill="#000" transform="rotate(45 9.5 7)"/><rect x="8.20" y="0.80" width="2.6" height="3" fill="#000" transform="rotate(90 9.5 7)"/><rect x="8.20" y="0.80" width="2.6" height="3" fill="#000" transform="rotate(135 9.5 7)"/><rect x="8.20" y="0.80" width="2.6" height="3" fill="#000" transform="rotate(180 9.5 7)"/><rect x="8.20" y="0.80" width="2.6" height="3" fill="#000" transform="rotate(225 9.5 7)"/><rect x="8.20" y="0.80" width="2.6" height="3" fill="#000" transform="rotate(270 9.5 7)"/><rect x="8.20" y="0.80" width="2.6" height="3" fill="#000" transform="rotate(315 9.5 7)"/><circle cx="9.5" cy="7" r="4.6" fill="#000"/><circle cx="9.5" cy="7" r="2.1" fill="#e0e0e0"/><rect x="1" y="8.5" width="7.5" height="6.5" fill="#707070" stroke="#000" stroke-width="1.1"/><rect x="3" y="9" width="3.5" height="2" fill="#fff"/></g><g transform="translate(332.40,82.10) scale(0.95)"><rect x="8.20" y="0.80" width="2.6" height="3" fill="#000" transform="rotate(0 9.5 7)"/><rect x="8.20" y="0.80" width="2.6" height="3" fill="#000" transform="rotate(45 9.5 7)"/><rect x="8.20" y="0.80" width="2.6" height="3" fill="#000" transform="rotate(90 9.5 7)"/><rect x="8.20" y="0.80" width="2.6" height="3" fill="#000" transform="rotate(135 9.5 7)"/><rect x="8.20" y="0.80" width="2.6" height="3" fill="#000" transform="rotate(180 9.5 7)"/><rect x="8.20" y="0.80" width="2.6" height="3" fill="#000" transform="rotate(225 9.5 7)"/><rect x="8.20" y="0.80" width="2.6" height="3" fill="#000" transform="rotate(270 9.5 7)"/><rect x="8.20" y="0.80" width="2.6" height="3" fill="#000" transform="rotate(315 9.5 7)"/><circle cx="9.5" cy="7" r="4.6" fill="#000"/><circle cx="9.5" cy="7" r="2.1" fill="#e0e0e0"/><path d="M1,15v-6h3l1,1h3.5v5z" fill="#f0e888" stroke="#000" stroke-width="1.1"/></g><g transform="translate(354.90,82.10) scale(0.95)"><rect x="7.70" y="1.80" width="2.6" height="3" fill="#000" transform="rotate(0 9 8)"/><rect x="7.70" y="1.80" width="2.6" height="3" fill="#000" transform="rotate(45 9 8)"/><rect x="7.70" y="1.80" width="2.6" height="3" fill="#000" transform="rotate(90 9 8)"/><rect x="7.70" y="1.80" width="2.6" height="3" fill="#000" transform="rotate(135 9 8)"/><rect x="7.70" y="1.80" width="2.6" height="3" fill="#000" transform="rotate(180 9 8)"/><rect x="7.70" y="1.80" width="2.6" height="3" fill="#000" transform="rotate(225 9 8)"/><rect x="7.70" y="1.80" width="2.6" height="3" fill="#000" transform="rotate(270 9 8)"/><rect x="7.70" y="1.80" width="2.6" height="3" fill="#000" transform="rotate(315 9 8)"/><circle cx="9" cy="8" r="4.6" fill="#000"/><circle cx="9" cy="8" r="2.1" fill="#e0e0e0"/><path d="M0.5,8.5l5,-3.5v2.2h2.5v3h-2.5v2.2z" fill="#c01818" transform="translate(0,1)"/><path d="M9,6.5v3M7.5,8h3" stroke="#fff" stroke-width="1"/></g><path d="M34.7,89.1h5.6l-2.8,3z" fill="#000"/><path d="M69.7,89.1h5.6l-2.8,3z" fill="#000"/><line x1="81.50" y1="82.00" x2="81.50" y2="99.50" stroke="#c5c2b0" stroke-width="1"/><line x1="82.50" y1="82.00" x2="82.50" y2="99.50" stroke="#ffffff" stroke-width="1" opacity="0.6"/><line x1="303.50" y1="82.00" x2="303.50" y2="99.50" stroke="#c5c2b0" stroke-width="1"/><line x1="304.50" y1="82.00" x2="304.50" y2="99.50" stroke="#ffffff" stroke-width="1" opacity="0.6"/><g transform="translate(12.40,112.10) scale(0.95)"><path d="M8,2.5l5.5,5.5h-11z" fill="#aaa79a"/><rect x="2.5" y="10" width="11" height="2.8" fill="#aaa79a"/></g><g transform="translate(34.90,112.10) scale(0.95)"><rect x="2.5" y="2.5" width="11" height="11" fill="#aaa79a"/></g><g transform="translate(62.40,112.10) scale(0.95)"><rect x="4" y="2.5" width="3" height="11" fill="#aaa79a"/><rect x="9" y="2.5" width="3" height="11" fill="#aaa79a"/></g><g transform="translate(91.20,112.10) scale(0.95)"><circle cx="8" cy="8" r="5.2" fill="#e01414"/></g><g transform="translate(119.40,112.10) scale(0.95)"><rect x="2.5" y="2.5" width="3" height="11" fill="#aaa79a"/><path d="M7.5,2.5l6,5.5l-6,5.5z" fill="#aaa79a"/></g><g transform="translate(141.20,112.10) scale(0.95)"><path d="M3.5,2.5l10,5.5l-10,5.5z" fill="#28d028"/></g><g transform="translate(176.90,112.10) scale(0.95)"><path d="M2.5,2.5l5.5,5.5l-5.5,5.5zM8,2.5l5.5,5.5l-5.5,5.5z" fill="#aaa79a"/></g><g transform="translate(199.40,112.10) scale(0.95)"><rect x="2.5" y="2.5" width="2.6" height="11" fill="#aaa79a"/><path d="M11,2.5l-5.5,5.5l5.5,5.5z" fill="#aaa79a"/><rect x="9" y="6.7" width="6" height="2.6" fill="#aaa79a"/></g><g transform="translate(417.40,112.10) scale(0.95)"><rect x="11.5" y="2.5" width="2.6" height="11" fill="#aaa79a"/><path d="M6,2.5l5.5,5.5l-5.5,5.5z" fill="#aaa79a"/><rect x="1" y="6.7" width="7" height="2.6" fill="#aaa79a"/></g><path d="M164.7,119.1h5.6l-2.8,3z" fill="#000"/><line x1="56.50" y1="111.00" x2="56.50" y2="130.00" stroke="#c5c2b0" stroke-width="1"/><line x1="57.50" y1="111.00" x2="57.50" y2="130.00" stroke="#ffffff" stroke-width="1" opacity="0.6"/><line x1="84.50" y1="111.00" x2="84.50" y2="130.00" stroke="#c5c2b0" stroke-width="1"/><line x1="85.50" y1="111.00" x2="85.50" y2="130.00" stroke="#ffffff" stroke-width="1" opacity="0.6"/><line x1="112.50" y1="111.00" x2="112.50" y2="130.00" stroke="#c5c2b0" stroke-width="1"/><line x1="113.50" y1="111.00" x2="113.50" y2="130.00" stroke="#ffffff" stroke-width="1" opacity="0.6"/><line x1="232.00" y1="117.90" x2="405.00" y2="117.90" stroke="#66635a" stroke-width="1.8"/><line x1="232.00" y1="119.40" x2="405.00" y2="119.40" stroke="#ffffff" stroke-width="1.2"/><rect x="226" y="112.5" width="6" height="13" fill="#f4f3ee" stroke="#fff" stroke-width="0.6"/><line x1="232.30" y1="112.00" x2="232.30" y2="126.00" stroke="#5a574a" stroke-width="1.2"/><line x1="226.00" y1="125.80" x2="232.50" y2="125.80" stroke="#6a675a" stroke-width="1.2"/><g transform="translate(11.90,142.40) scale(0.95)"><rect x="3" y="0.5" width="8.5" height="8" fill="#f8f8f4" stroke="#a0a090" stroke-width="0.8"/><path d="M7.2,2v5M4.8,4.5h5" stroke="#c02040" stroke-width="1.5"/><path d="M1.5,9.5h2M1.5,11.5h2M12.5,9.5h2M12.5,11.5h2" stroke="#000" stroke-width="1"/><rect x="3" y="8" width="4" height="5.4" rx="1.5" fill="#fff" stroke="#000" stroke-width="1.3"/><rect x="9" y="8" width="4" height="5.4" rx="1.5" fill="#fff" stroke="#000" stroke-width="1.3"/></g><rect x="34.00" y="142.00" width="6.90" height="6.90" fill="#b6b4aa"/><rect x="42.82" y="142.00" width="6.90" height="6.90" fill="#b6b4aa"/><rect x="51.64" y="142.00" width="6.90" height="6.90" fill="#b6b4aa"/><rect x="60.46" y="142.00" width="6.90" height="6.90" fill="#b6b4aa"/><rect x="69.28" y="142.00" width="6.90" height="6.90" fill="#b6b4aa"/><rect x="78.10" y="142.00" width="6.90" height="6.90" fill="#b6b4aa"/><rect x="86.92" y="142.00" width="6.90" height="6.90" fill="#b6b4aa"/><rect x="95.74" y="142.00" width="6.90" height="6.90" fill="#b6b4aa"/><rect x="104.56" y="142.00" width="6.90" height="6.90" fill="#b6b4aa"/><rect x="113.38" y="142.00" width="6.90" height="6.90" fill="#b6b4aa"/><rect x="122.20" y="142.00" width="6.90" height="6.90" fill="#b6b4aa"/><rect x="131.02" y="142.00" width="6.90" height="6.90" fill="#b6b4aa"/><rect x="139.84" y="142.00" width="6.90" height="6.90" fill="#b6b4aa"/><rect x="148.66" y="142.00" width="6.90" height="6.90" fill="#b6b4aa"/><rect x="157.48" y="142.00" width="6.90" height="6.90" fill="#b6b4aa"/><rect x="166.30" y="142.00" width="6.90" height="6.90" fill="#b6b4aa"/><rect x="34.00" y="151.00" width="6.90" height="6.90" fill="#b6b4aa"/><rect x="42.82" y="151.00" width="6.90" height="6.90" fill="#b6b4aa"/><rect x="51.64" y="151.00" width="6.90" height="6.90" fill="#b6b4aa"/><rect x="60.46" y="151.00" width="6.90" height="6.90" fill="#b6b4aa"/><rect x="69.28" y="151.00" width="6.90" height="6.90" fill="#b6b4aa"/><rect x="78.10" y="151.00" width="6.90" height="6.90" fill="#b6b4aa"/><rect x="86.92" y="151.00" width="6.90" height="6.90" fill="#b6b4aa"/><rect x="95.74" y="151.00" width="6.90" height="6.90" fill="#b6b4aa"/><rect x="104.56" y="151.00" width="6.90" height="6.90" fill="#b6b4aa"/><rect x="113.38" y="151.00" width="6.90" height="6.90" fill="#b6b4aa"/><rect x="122.20" y="151.00" width="6.90" height="6.90" fill="#b6b4aa"/><rect x="131.02" y="151.00" width="6.90" height="6.90" fill="#b6b4aa"/><rect x="139.84" y="151.00" width="6.90" height="6.90" fill="#b6b4aa"/><rect x="148.66" y="151.00" width="6.90" height="6.90" fill="#b6b4aa"/><rect x="157.48" y="151.00" width="6.90" height="6.90" fill="#b6b4aa"/><rect x="166.30" y="151.00" width="6.90" height="6.90" fill="#b6b4aa"/><rect x="620.50" y="1113.50" width="43.00" height="21.50" fill="#f1efe5"/><rect x="669.50" y="1113.50" width="21.50" height="21.50" fill="#f3f1e8"/><line x1="669.80" y1="1113.50" x2="669.80" y2="1134.50" stroke="#b4b1a0" stroke-width="1"/><line x1="690.70" y1="1113.50" x2="690.70" y2="1134.50" stroke="#fff" stroke-width="1"/><line x1="669.50" y1="1113.80" x2="691.00" y2="1113.80" stroke="#b8b5a4" stroke-width="1"/><line x1="669.50" y1="1134.50" x2="691.00" y2="1134.50" stroke="#fff" stroke-width="1"/><rect x="691.50" y="1113.50" width="21.50" height="21.50" fill="#f3f1e8"/><line x1="691.80" y1="1113.50" x2="691.80" y2="1134.50" stroke="#b4b1a0" stroke-width="1"/><line x1="712.70" y1="1113.50" x2="712.70" y2="1134.50" stroke="#fff" stroke-width="1"/><line x1="691.50" y1="1113.80" x2="713.00" y2="1113.80" stroke="#b8b5a4" stroke-width="1"/><line x1="691.50" y1="1134.50" x2="713.00" y2="1134.50" stroke="#fff" stroke-width="1"/><rect x="713.80" y="1113.50" width="21.50" height="21.50" fill="#f3f1e8"/><line x1="714.10" y1="1113.50" x2="714.10" y2="1134.50" stroke="#b4b1a0" stroke-width="1"/><line x1="735.00" y1="1113.50" x2="735.00" y2="1134.50" stroke="#fff" stroke-width="1"/><line x1="713.80" y1="1113.80" x2="735.30" y2="1113.80" stroke="#b8b5a4" stroke-width="1"/><line x1="713.80" y1="1134.50" x2="735.30" y2="1134.50" stroke="#fff" stroke-width="1"/><rect x="736.50" y="1113.50" width="21.50" height="21.50" fill="#f3f1e8"/><line x1="736.80" y1="1113.50" x2="736.80" y2="1134.50" stroke="#b4b1a0" stroke-width="1"/><line x1="757.70" y1="1113.50" x2="757.70" y2="1134.50" stroke="#fff" stroke-width="1"/><line x1="736.50" y1="1113.80" x2="758.00" y2="1113.80" stroke="#b8b5a4" stroke-width="1"/><line x1="736.50" y1="1134.50" x2="758.00" y2="1134.50" stroke="#fff" stroke-width="1"/><rect x="758.50" y="1113.50" width="21.50" height="21.50" fill="#f3f1e8"/><line x1="758.80" y1="1113.50" x2="758.80" y2="1134.50" stroke="#b4b1a0" stroke-width="1"/><line x1="779.70" y1="1113.50" x2="779.70" y2="1134.50" stroke="#fff" stroke-width="1"/><line x1="758.50" y1="1113.80" x2="780.00" y2="1113.80" stroke="#b8b5a4" stroke-width="1"/><line x1="758.50" y1="1134.50" x2="780.00" y2="1134.50" stroke="#fff" stroke-width="1"/><line x1="665.50" y1="1114.00" x2="665.50" y2="1134.00" stroke="#c5c2b0" stroke-width="1"/><line x1="666.50" y1="1114.00" x2="666.50" y2="1134.00" stroke="#ffffff" stroke-width="1" opacity="0.6"/><line x1="783.50" y1="1114.00" x2="783.50" y2="1134.00" stroke="#c5c2b0" stroke-width="1"/><line x1="784.50" y1="1114.00" x2="784.50" y2="1134.00" stroke="#ffffff" stroke-width="1" opacity="0.6"/><line x1="620.00" y1="1113.80" x2="641.00" y2="1113.80" stroke="#b8b5a4" stroke-width="1"/><line x1="620.30" y1="1113.50" x2="620.30" y2="1134.00" stroke="#b8b5a4" stroke-width="1"/><circle cx="629.9" cy="1124.2" r="6.6" fill="none" stroke="#000" stroke-width="1"/><circle cx="629.9" cy="1124.2" r="2.4" fill="none" stroke="#000" stroke-width="0.9"/><circle cx="651.5" cy="1123.7" r="7.2" fill="none" stroke="#000" stroke-width="1"/><circle cx="651.5" cy="1123.7" r="4.8" fill="none" stroke="#000" stroke-width="0.9"/><circle cx="651.5" cy="1123.7" r="0.6" fill="#000"/><circle cx="680.4" cy="1124.2" r="7" fill="#90d0d0" stroke="#102060" stroke-width="1.2"/><path d="M673.4,1124.2a7,7 0 0 1 7,-7v7z" fill="#38a048"/><path d="M680.4,1124.2h7a7,7 0 0 1 -7,7z" fill="#18206a"/><path d="M680.4,1117.2v14M673.4,1124.2h14M675.5,1119.2l10,10M685.3,1119.2l-10,10" stroke="#000" stroke-width="0.8" stroke-dasharray="1.5,1"/><circle cx="703.3" cy="1124.2" r="7" fill="#fbeaea" stroke="#000" stroke-width="1"/><path d="M698,1121.2l5,3l4,-4M703,1124.2l-1,5M703,1124.2l5,2" stroke="#c04060" stroke-width="0.9" fill="none"/><ellipse cx="725" cy="1124.2" rx="4.6" ry="3.8" fill="#188890"/><path d="M717.8,1119.7v9M732.2,1119.7v9M717.8,1124.2h14.4" stroke="#188890" stroke-width="1.4"/><text x="747.5" y="1120.7" font-size="6.5" font-weight="bold" text-anchor="middle">N</text><text x="747.5" y="1132.0" font-size="6.5" font-weight="bold" text-anchor="middle">S</text><text x="741.5" y="1126.5" font-size="6.5" font-weight="bold" text-anchor="middle">W</text><text x="753.5" y="1126.5" font-size="6.5" font-weight="bold" text-anchor="middle">E</text><path d="M747.5,1121.7v5M745.5,1124.2h4" stroke="#000" stroke-width="1.2"/><path d="M762.5,1130.7l8,-14" stroke="#000" stroke-width="1.2"/><text x="774" y="1122.2" font-size="6.5" font-weight="bold" text-anchor="middle">0°</text><text x="772" y="1131.2" font-size="6.5" font-weight="bold" text-anchor="middle">80°</text></g>
</svg>
</body></html>
